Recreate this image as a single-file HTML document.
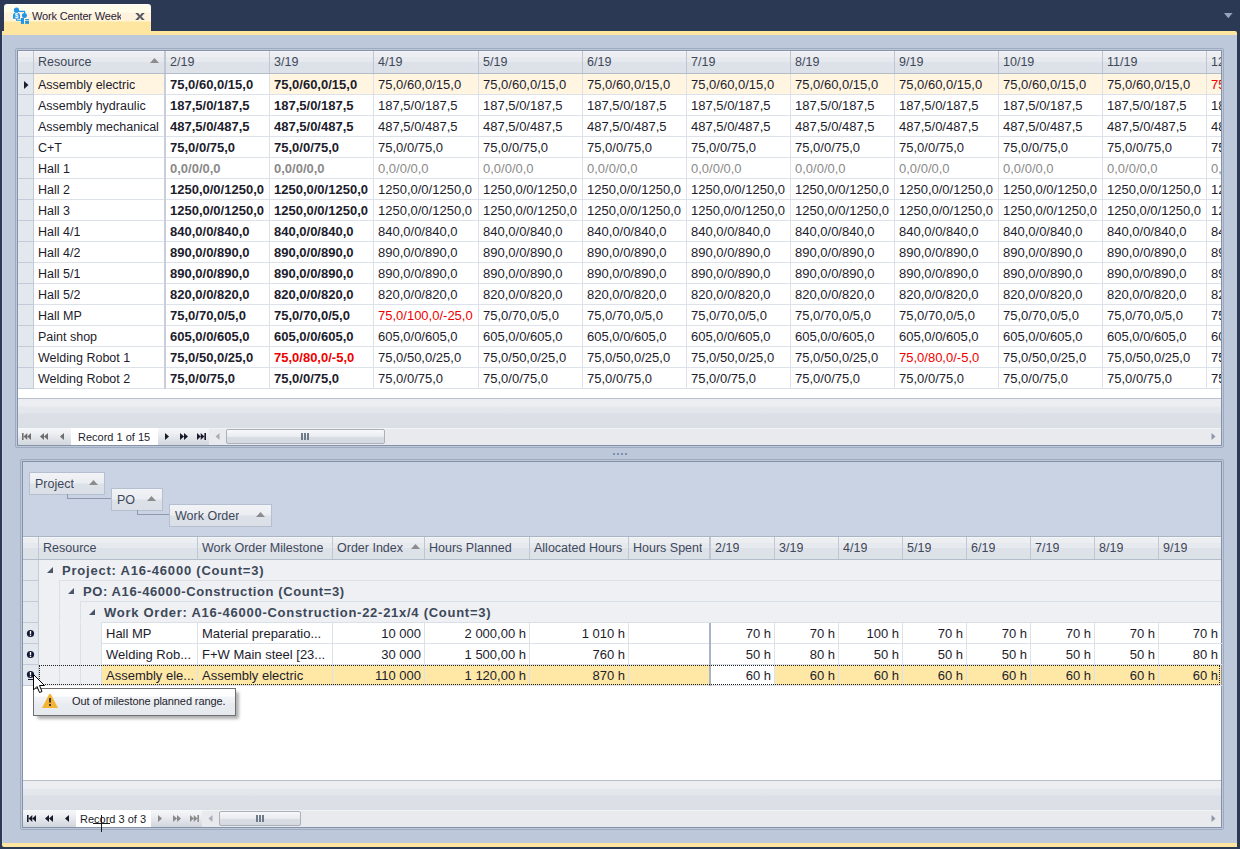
<!DOCTYPE html>
<html><head><meta charset="utf-8"><style>
html,body{margin:0;padding:0;}
body{width:1240px;height:849px;background:#2b3954;position:relative;overflow:hidden;font-family:'Liberation Sans', sans-serif;}
div{position:absolute;}
.t{white-space:nowrap;line-height:20px;overflow:hidden;}
</style></head><body>
<div style="left:2px;top:35px;width:1235px;height:808px;background:#bdc9da;"></div>
<div style="left:2px;top:35px;width:1px;height:808px;background:#c9d2df;"></div>
<div style="left:2px;top:31px;width:1235px;height:4px;background:#ffe6a0;border-top-right-radius:2px;"></div>
<div style="left:2px;top:843px;width:1235px;height:4px;background:#ffe6a0;border-bottom-left-radius:2px;"></div>
<div style="left:4px;top:4px;width:147px;height:27px;background:linear-gradient(#ffffff 0px,#ffffff 1px,#fffbec 1px,#fffce8 8px,#fff3de 9px,#fff2dc 16px,#fff7d2 17px,#ffe6a0 18px,#ffe6a0 27px);border-radius:3px 3px 0 0;"></div>
<svg style="position:absolute;left:10px;top:5px" width="22" height="22" viewBox="0 0 22 22">
<g fill="#1f95e6">
<circle cx="6.5" cy="5.2" r="2.6"/>
<path d="M3 13.8 V10.3 Q3 7.8 5.2 7.8 H7.8 Q10 7.8 10 10.3 V13.8 Z"/>
<circle cx="14.4" cy="10.4" r="2.5"/>
<rect x="10.9" y="13" width="3.1" height="5.9"/>
<rect x="15.2" y="14.1" width="3.8" height="1.2"/>
<rect x="15.2" y="15.9" width="3.8" height="3"/>
</g>
<path d="M8.5 6.3 H14.6 V8.3" stroke="#1f95e6" stroke-width="1.2" fill="none"/>
<path d="M6.5 13.5 V15.3 H11" stroke="#1f95e6" stroke-width="1.1" fill="none"/>
<text x="6.5" y="13" font-family="Liberation Sans" font-weight="bold" font-size="6.5" fill="#fff" text-anchor="middle">$</text>
</svg>
<div class="t" style="left:32px;top:6px;width:89px;overflow:hidden;font-size:11px;color:#24243a;letter-spacing:-0.15px;line-height:20px">Work Center Week</div>
<svg style="position:absolute;left:134.7px;top:13px" width="10" height="7" viewBox="0 0 9.6 7"><path d="M0 0 H3 L4.8 2.2 L6.6 0 H9.6 L6.3 3.5 L9.6 7 H6.6 L4.8 4.8 L3 7 H0 L3.3 3.5 Z" fill="#565b64"/></svg>
<svg style="position:absolute;left:1224.3px;top:12.7px" width="9" height="6" viewBox="0 0 9 6"><path d="M0 0 H8.6 L4.3 5.2 Z" fill="#95a3bd"/></svg>
<div style="left:15px;top:48px;width:1209px;height:400px;box-sizing:border-box;border:1px solid #9eaabd;border-radius:2px;"></div>
<div style="left:17px;top:50px;width:1205px;height:396px;box-sizing:border-box;border:1px solid #8591a6;"></div>
<div style="left:18px;top:51px;width:1203px;height:22px;background:linear-gradient(#f5f6f8 0px,#f5f6f8 1px,#eceef2 1px,#eceef2 6px,#e6e9ee 6px,#e6e9ee 11px,#dde1e8 11px,#dde1e8 22px);"></div>
<div style="left:18px;top:73px;width:1203px;height:1px;background:#b3bccb;"></div>
<div style="left:33px;top:51px;width:1px;height:22px;background:#bfc7d4;"></div>
<div style="left:164px;top:51px;width:2px;height:22px;background:#bfc7d4;"></div>
<div style="left:269px;top:51px;width:1px;height:22px;background:#bfc7d4;"></div>
<div style="left:373px;top:51px;width:1px;height:22px;background:#bfc7d4;"></div>
<div style="left:478px;top:51px;width:1px;height:22px;background:#bfc7d4;"></div>
<div style="left:582px;top:51px;width:1px;height:22px;background:#bfc7d4;"></div>
<div style="left:686px;top:51px;width:1px;height:22px;background:#bfc7d4;"></div>
<div style="left:790px;top:51px;width:1px;height:22px;background:#bfc7d4;"></div>
<div style="left:894px;top:51px;width:1px;height:22px;background:#bfc7d4;"></div>
<div style="left:998px;top:51px;width:1px;height:22px;background:#bfc7d4;"></div>
<div style="left:1102px;top:51px;width:1px;height:22px;background:#bfc7d4;"></div>
<div style="left:1206px;top:51px;width:1px;height:22px;background:#bfc7d4;"></div>
<div class="t" style="left:38px;top:52px;text-align:left;color:#3e485a;font-size:12.5px;">Resource</div>
<svg style="position:absolute;left:150px;top:58px" width="9" height="5" viewBox="0 0 9 5"><path d="M0 5 L4.5 0 L9 5 Z" fill="#8c8c8c"/></svg>
<div class="t" style="left:170px;top:52px;width:99px;text-align:left;color:#3e485a;font-size:12.5px;">2/19</div>
<div class="t" style="left:274px;top:52px;width:99px;text-align:left;color:#3e485a;font-size:12.5px;">3/19</div>
<div class="t" style="left:378px;top:52px;width:100px;text-align:left;color:#3e485a;font-size:12.5px;">4/19</div>
<div class="t" style="left:483px;top:52px;width:99px;text-align:left;color:#3e485a;font-size:12.5px;">5/19</div>
<div class="t" style="left:587px;top:52px;width:99px;text-align:left;color:#3e485a;font-size:12.5px;">6/19</div>
<div class="t" style="left:691px;top:52px;width:99px;text-align:left;color:#3e485a;font-size:12.5px;">7/19</div>
<div class="t" style="left:795px;top:52px;width:99px;text-align:left;color:#3e485a;font-size:12.5px;">8/19</div>
<div class="t" style="left:899px;top:52px;width:99px;text-align:left;color:#3e485a;font-size:12.5px;">9/19</div>
<div class="t" style="left:1003px;top:52px;width:99px;text-align:left;color:#3e485a;font-size:12.5px;">10/19</div>
<div class="t" style="left:1107px;top:52px;width:99px;text-align:left;color:#3e485a;font-size:12.5px;">11/19</div>
<div class="t" style="left:1211px;top:52px;width:10px;text-align:left;color:#3e485a;font-size:12.5px;">12/19</div>
<div style="left:18px;top:74px;width:1203px;height:370px;background:#fff;"></div>
<div style="left:18px;top:74px;width:15px;height:20px;background:#e3e7ee;"></div>
<div style="left:18px;top:94px;width:15px;height:1px;background:#c3cbd8;"></div>
<div style="left:33px;top:74px;width:1px;height:21px;background:#c3cbd8;"></div>
<div style="left:34px;top:74px;width:130px;height:20px;background:#fff5e1;"></div>
<div style="left:34px;top:94px;width:130px;height:1px;background:#dde2ea;"></div>
<div style="left:164px;top:74px;width:2px;height:21px;background:#c8cfdb;"></div>
<div class="t" style="left:38px;top:75px;text-align:left;color:#1c1c2c;font-size:12.5px;">Assembly electric</div>
<div style="left:166px;top:74px;width:103px;height:20px;background:#ffffff;"></div>
<div style="left:166px;top:94px;width:104px;height:1px;background:#dde2ea;"></div>
<div style="left:269px;top:74px;width:1px;height:20px;background:#dde2ea;"></div>
<div class="t" style="left:170px;top:75px;width:99px;text-align:left;color:#1c1c2c;font-size:13px;font-weight:bold;">75,0/60,0/15,0</div>
<div style="left:270px;top:74px;width:103px;height:20px;background:#fff5e1;"></div>
<div style="left:270px;top:94px;width:104px;height:1px;background:#dde2ea;"></div>
<div style="left:373px;top:74px;width:1px;height:20px;background:#dde2ea;"></div>
<div class="t" style="left:274px;top:75px;width:99px;text-align:left;color:#1c1c2c;font-size:13px;font-weight:bold;">75,0/60,0/15,0</div>
<div style="left:374px;top:74px;width:104px;height:20px;background:#fff5e1;"></div>
<div style="left:374px;top:94px;width:105px;height:1px;background:#dde2ea;"></div>
<div style="left:478px;top:74px;width:1px;height:20px;background:#dde2ea;"></div>
<div class="t" style="left:378px;top:75px;width:100px;text-align:left;color:#1c1c2c;font-size:13px;">75,0/60,0/15,0</div>
<div style="left:479px;top:74px;width:103px;height:20px;background:#fff5e1;"></div>
<div style="left:479px;top:94px;width:104px;height:1px;background:#dde2ea;"></div>
<div style="left:582px;top:74px;width:1px;height:20px;background:#dde2ea;"></div>
<div class="t" style="left:483px;top:75px;width:99px;text-align:left;color:#1c1c2c;font-size:13px;">75,0/60,0/15,0</div>
<div style="left:583px;top:74px;width:103px;height:20px;background:#fff5e1;"></div>
<div style="left:583px;top:94px;width:104px;height:1px;background:#dde2ea;"></div>
<div style="left:686px;top:74px;width:1px;height:20px;background:#dde2ea;"></div>
<div class="t" style="left:587px;top:75px;width:99px;text-align:left;color:#1c1c2c;font-size:13px;">75,0/60,0/15,0</div>
<div style="left:687px;top:74px;width:103px;height:20px;background:#fff5e1;"></div>
<div style="left:687px;top:94px;width:104px;height:1px;background:#dde2ea;"></div>
<div style="left:790px;top:74px;width:1px;height:20px;background:#dde2ea;"></div>
<div class="t" style="left:691px;top:75px;width:99px;text-align:left;color:#1c1c2c;font-size:13px;">75,0/60,0/15,0</div>
<div style="left:791px;top:74px;width:103px;height:20px;background:#fff5e1;"></div>
<div style="left:791px;top:94px;width:104px;height:1px;background:#dde2ea;"></div>
<div style="left:894px;top:74px;width:1px;height:20px;background:#dde2ea;"></div>
<div class="t" style="left:795px;top:75px;width:99px;text-align:left;color:#1c1c2c;font-size:13px;">75,0/60,0/15,0</div>
<div style="left:895px;top:74px;width:103px;height:20px;background:#fff5e1;"></div>
<div style="left:895px;top:94px;width:104px;height:1px;background:#dde2ea;"></div>
<div style="left:998px;top:74px;width:1px;height:20px;background:#dde2ea;"></div>
<div class="t" style="left:899px;top:75px;width:99px;text-align:left;color:#1c1c2c;font-size:13px;">75,0/60,0/15,0</div>
<div style="left:999px;top:74px;width:103px;height:20px;background:#fff5e1;"></div>
<div style="left:999px;top:94px;width:104px;height:1px;background:#dde2ea;"></div>
<div style="left:1102px;top:74px;width:1px;height:20px;background:#dde2ea;"></div>
<div class="t" style="left:1003px;top:75px;width:99px;text-align:left;color:#1c1c2c;font-size:13px;">75,0/60,0/15,0</div>
<div style="left:1103px;top:74px;width:103px;height:20px;background:#fff5e1;"></div>
<div style="left:1103px;top:94px;width:104px;height:1px;background:#dde2ea;"></div>
<div style="left:1206px;top:74px;width:1px;height:20px;background:#dde2ea;"></div>
<div class="t" style="left:1107px;top:75px;width:99px;text-align:left;color:#1c1c2c;font-size:13px;">75,0/60,0/15,0</div>
<div style="left:1207px;top:74px;width:14px;height:20px;background:#fff5e1;"></div>
<div style="left:1207px;top:94px;width:14px;height:1px;background:#dde2ea;"></div>
<div class="t" style="left:1211px;top:75px;width:10px;text-align:left;color:#ee0000;font-size:13px;">75,0/60,0/15,0</div>
<div style="left:18px;top:95px;width:15px;height:20px;background:#e3e7ee;"></div>
<div style="left:18px;top:115px;width:15px;height:1px;background:#c3cbd8;"></div>
<div style="left:33px;top:95px;width:1px;height:21px;background:#c3cbd8;"></div>
<div style="left:34px;top:95px;width:130px;height:20px;background:#ffffff;"></div>
<div style="left:34px;top:115px;width:130px;height:1px;background:#dde2ea;"></div>
<div style="left:164px;top:95px;width:2px;height:21px;background:#c8cfdb;"></div>
<div class="t" style="left:38px;top:96px;text-align:left;color:#1c1c2c;font-size:12.5px;">Assembly hydraulic</div>
<div style="left:166px;top:95px;width:103px;height:20px;background:#ffffff;"></div>
<div style="left:166px;top:115px;width:104px;height:1px;background:#dde2ea;"></div>
<div style="left:269px;top:95px;width:1px;height:20px;background:#dde2ea;"></div>
<div class="t" style="left:170px;top:96px;width:99px;text-align:left;color:#1c1c2c;font-size:13px;font-weight:bold;">187,5/0/187,5</div>
<div style="left:270px;top:95px;width:103px;height:20px;background:#ffffff;"></div>
<div style="left:270px;top:115px;width:104px;height:1px;background:#dde2ea;"></div>
<div style="left:373px;top:95px;width:1px;height:20px;background:#dde2ea;"></div>
<div class="t" style="left:274px;top:96px;width:99px;text-align:left;color:#1c1c2c;font-size:13px;font-weight:bold;">187,5/0/187,5</div>
<div style="left:374px;top:95px;width:104px;height:20px;background:#ffffff;"></div>
<div style="left:374px;top:115px;width:105px;height:1px;background:#dde2ea;"></div>
<div style="left:478px;top:95px;width:1px;height:20px;background:#dde2ea;"></div>
<div class="t" style="left:378px;top:96px;width:100px;text-align:left;color:#1c1c2c;font-size:13px;">187,5/0/187,5</div>
<div style="left:479px;top:95px;width:103px;height:20px;background:#ffffff;"></div>
<div style="left:479px;top:115px;width:104px;height:1px;background:#dde2ea;"></div>
<div style="left:582px;top:95px;width:1px;height:20px;background:#dde2ea;"></div>
<div class="t" style="left:483px;top:96px;width:99px;text-align:left;color:#1c1c2c;font-size:13px;">187,5/0/187,5</div>
<div style="left:583px;top:95px;width:103px;height:20px;background:#ffffff;"></div>
<div style="left:583px;top:115px;width:104px;height:1px;background:#dde2ea;"></div>
<div style="left:686px;top:95px;width:1px;height:20px;background:#dde2ea;"></div>
<div class="t" style="left:587px;top:96px;width:99px;text-align:left;color:#1c1c2c;font-size:13px;">187,5/0/187,5</div>
<div style="left:687px;top:95px;width:103px;height:20px;background:#ffffff;"></div>
<div style="left:687px;top:115px;width:104px;height:1px;background:#dde2ea;"></div>
<div style="left:790px;top:95px;width:1px;height:20px;background:#dde2ea;"></div>
<div class="t" style="left:691px;top:96px;width:99px;text-align:left;color:#1c1c2c;font-size:13px;">187,5/0/187,5</div>
<div style="left:791px;top:95px;width:103px;height:20px;background:#ffffff;"></div>
<div style="left:791px;top:115px;width:104px;height:1px;background:#dde2ea;"></div>
<div style="left:894px;top:95px;width:1px;height:20px;background:#dde2ea;"></div>
<div class="t" style="left:795px;top:96px;width:99px;text-align:left;color:#1c1c2c;font-size:13px;">187,5/0/187,5</div>
<div style="left:895px;top:95px;width:103px;height:20px;background:#ffffff;"></div>
<div style="left:895px;top:115px;width:104px;height:1px;background:#dde2ea;"></div>
<div style="left:998px;top:95px;width:1px;height:20px;background:#dde2ea;"></div>
<div class="t" style="left:899px;top:96px;width:99px;text-align:left;color:#1c1c2c;font-size:13px;">187,5/0/187,5</div>
<div style="left:999px;top:95px;width:103px;height:20px;background:#ffffff;"></div>
<div style="left:999px;top:115px;width:104px;height:1px;background:#dde2ea;"></div>
<div style="left:1102px;top:95px;width:1px;height:20px;background:#dde2ea;"></div>
<div class="t" style="left:1003px;top:96px;width:99px;text-align:left;color:#1c1c2c;font-size:13px;">187,5/0/187,5</div>
<div style="left:1103px;top:95px;width:103px;height:20px;background:#ffffff;"></div>
<div style="left:1103px;top:115px;width:104px;height:1px;background:#dde2ea;"></div>
<div style="left:1206px;top:95px;width:1px;height:20px;background:#dde2ea;"></div>
<div class="t" style="left:1107px;top:96px;width:99px;text-align:left;color:#1c1c2c;font-size:13px;">187,5/0/187,5</div>
<div style="left:1207px;top:95px;width:14px;height:20px;background:#ffffff;"></div>
<div style="left:1207px;top:115px;width:14px;height:1px;background:#dde2ea;"></div>
<div class="t" style="left:1211px;top:96px;width:10px;text-align:left;color:#1c1c2c;font-size:13px;">187,5/0/187,5</div>
<div style="left:18px;top:116px;width:15px;height:20px;background:#e3e7ee;"></div>
<div style="left:18px;top:136px;width:15px;height:1px;background:#c3cbd8;"></div>
<div style="left:33px;top:116px;width:1px;height:21px;background:#c3cbd8;"></div>
<div style="left:34px;top:116px;width:130px;height:20px;background:#ffffff;"></div>
<div style="left:34px;top:136px;width:130px;height:1px;background:#dde2ea;"></div>
<div style="left:164px;top:116px;width:2px;height:21px;background:#c8cfdb;"></div>
<div class="t" style="left:38px;top:117px;text-align:left;color:#1c1c2c;font-size:12.5px;">Assembly mechanical</div>
<div style="left:166px;top:116px;width:103px;height:20px;background:#ffffff;"></div>
<div style="left:166px;top:136px;width:104px;height:1px;background:#dde2ea;"></div>
<div style="left:269px;top:116px;width:1px;height:20px;background:#dde2ea;"></div>
<div class="t" style="left:170px;top:117px;width:99px;text-align:left;color:#1c1c2c;font-size:13px;font-weight:bold;">487,5/0/487,5</div>
<div style="left:270px;top:116px;width:103px;height:20px;background:#ffffff;"></div>
<div style="left:270px;top:136px;width:104px;height:1px;background:#dde2ea;"></div>
<div style="left:373px;top:116px;width:1px;height:20px;background:#dde2ea;"></div>
<div class="t" style="left:274px;top:117px;width:99px;text-align:left;color:#1c1c2c;font-size:13px;font-weight:bold;">487,5/0/487,5</div>
<div style="left:374px;top:116px;width:104px;height:20px;background:#ffffff;"></div>
<div style="left:374px;top:136px;width:105px;height:1px;background:#dde2ea;"></div>
<div style="left:478px;top:116px;width:1px;height:20px;background:#dde2ea;"></div>
<div class="t" style="left:378px;top:117px;width:100px;text-align:left;color:#1c1c2c;font-size:13px;">487,5/0/487,5</div>
<div style="left:479px;top:116px;width:103px;height:20px;background:#ffffff;"></div>
<div style="left:479px;top:136px;width:104px;height:1px;background:#dde2ea;"></div>
<div style="left:582px;top:116px;width:1px;height:20px;background:#dde2ea;"></div>
<div class="t" style="left:483px;top:117px;width:99px;text-align:left;color:#1c1c2c;font-size:13px;">487,5/0/487,5</div>
<div style="left:583px;top:116px;width:103px;height:20px;background:#ffffff;"></div>
<div style="left:583px;top:136px;width:104px;height:1px;background:#dde2ea;"></div>
<div style="left:686px;top:116px;width:1px;height:20px;background:#dde2ea;"></div>
<div class="t" style="left:587px;top:117px;width:99px;text-align:left;color:#1c1c2c;font-size:13px;">487,5/0/487,5</div>
<div style="left:687px;top:116px;width:103px;height:20px;background:#ffffff;"></div>
<div style="left:687px;top:136px;width:104px;height:1px;background:#dde2ea;"></div>
<div style="left:790px;top:116px;width:1px;height:20px;background:#dde2ea;"></div>
<div class="t" style="left:691px;top:117px;width:99px;text-align:left;color:#1c1c2c;font-size:13px;">487,5/0/487,5</div>
<div style="left:791px;top:116px;width:103px;height:20px;background:#ffffff;"></div>
<div style="left:791px;top:136px;width:104px;height:1px;background:#dde2ea;"></div>
<div style="left:894px;top:116px;width:1px;height:20px;background:#dde2ea;"></div>
<div class="t" style="left:795px;top:117px;width:99px;text-align:left;color:#1c1c2c;font-size:13px;">487,5/0/487,5</div>
<div style="left:895px;top:116px;width:103px;height:20px;background:#ffffff;"></div>
<div style="left:895px;top:136px;width:104px;height:1px;background:#dde2ea;"></div>
<div style="left:998px;top:116px;width:1px;height:20px;background:#dde2ea;"></div>
<div class="t" style="left:899px;top:117px;width:99px;text-align:left;color:#1c1c2c;font-size:13px;">487,5/0/487,5</div>
<div style="left:999px;top:116px;width:103px;height:20px;background:#ffffff;"></div>
<div style="left:999px;top:136px;width:104px;height:1px;background:#dde2ea;"></div>
<div style="left:1102px;top:116px;width:1px;height:20px;background:#dde2ea;"></div>
<div class="t" style="left:1003px;top:117px;width:99px;text-align:left;color:#1c1c2c;font-size:13px;">487,5/0/487,5</div>
<div style="left:1103px;top:116px;width:103px;height:20px;background:#ffffff;"></div>
<div style="left:1103px;top:136px;width:104px;height:1px;background:#dde2ea;"></div>
<div style="left:1206px;top:116px;width:1px;height:20px;background:#dde2ea;"></div>
<div class="t" style="left:1107px;top:117px;width:99px;text-align:left;color:#1c1c2c;font-size:13px;">487,5/0/487,5</div>
<div style="left:1207px;top:116px;width:14px;height:20px;background:#ffffff;"></div>
<div style="left:1207px;top:136px;width:14px;height:1px;background:#dde2ea;"></div>
<div class="t" style="left:1211px;top:117px;width:10px;text-align:left;color:#1c1c2c;font-size:13px;">487,5/0/487,5</div>
<div style="left:18px;top:137px;width:15px;height:20px;background:#e3e7ee;"></div>
<div style="left:18px;top:157px;width:15px;height:1px;background:#c3cbd8;"></div>
<div style="left:33px;top:137px;width:1px;height:21px;background:#c3cbd8;"></div>
<div style="left:34px;top:137px;width:130px;height:20px;background:#ffffff;"></div>
<div style="left:34px;top:157px;width:130px;height:1px;background:#dde2ea;"></div>
<div style="left:164px;top:137px;width:2px;height:21px;background:#c8cfdb;"></div>
<div class="t" style="left:38px;top:138px;text-align:left;color:#1c1c2c;font-size:12.5px;">C+T</div>
<div style="left:166px;top:137px;width:103px;height:20px;background:#ffffff;"></div>
<div style="left:166px;top:157px;width:104px;height:1px;background:#dde2ea;"></div>
<div style="left:269px;top:137px;width:1px;height:20px;background:#dde2ea;"></div>
<div class="t" style="left:170px;top:138px;width:99px;text-align:left;color:#1c1c2c;font-size:13px;font-weight:bold;">75,0/0/75,0</div>
<div style="left:270px;top:137px;width:103px;height:20px;background:#ffffff;"></div>
<div style="left:270px;top:157px;width:104px;height:1px;background:#dde2ea;"></div>
<div style="left:373px;top:137px;width:1px;height:20px;background:#dde2ea;"></div>
<div class="t" style="left:274px;top:138px;width:99px;text-align:left;color:#1c1c2c;font-size:13px;font-weight:bold;">75,0/0/75,0</div>
<div style="left:374px;top:137px;width:104px;height:20px;background:#ffffff;"></div>
<div style="left:374px;top:157px;width:105px;height:1px;background:#dde2ea;"></div>
<div style="left:478px;top:137px;width:1px;height:20px;background:#dde2ea;"></div>
<div class="t" style="left:378px;top:138px;width:100px;text-align:left;color:#1c1c2c;font-size:13px;">75,0/0/75,0</div>
<div style="left:479px;top:137px;width:103px;height:20px;background:#ffffff;"></div>
<div style="left:479px;top:157px;width:104px;height:1px;background:#dde2ea;"></div>
<div style="left:582px;top:137px;width:1px;height:20px;background:#dde2ea;"></div>
<div class="t" style="left:483px;top:138px;width:99px;text-align:left;color:#1c1c2c;font-size:13px;">75,0/0/75,0</div>
<div style="left:583px;top:137px;width:103px;height:20px;background:#ffffff;"></div>
<div style="left:583px;top:157px;width:104px;height:1px;background:#dde2ea;"></div>
<div style="left:686px;top:137px;width:1px;height:20px;background:#dde2ea;"></div>
<div class="t" style="left:587px;top:138px;width:99px;text-align:left;color:#1c1c2c;font-size:13px;">75,0/0/75,0</div>
<div style="left:687px;top:137px;width:103px;height:20px;background:#ffffff;"></div>
<div style="left:687px;top:157px;width:104px;height:1px;background:#dde2ea;"></div>
<div style="left:790px;top:137px;width:1px;height:20px;background:#dde2ea;"></div>
<div class="t" style="left:691px;top:138px;width:99px;text-align:left;color:#1c1c2c;font-size:13px;">75,0/0/75,0</div>
<div style="left:791px;top:137px;width:103px;height:20px;background:#ffffff;"></div>
<div style="left:791px;top:157px;width:104px;height:1px;background:#dde2ea;"></div>
<div style="left:894px;top:137px;width:1px;height:20px;background:#dde2ea;"></div>
<div class="t" style="left:795px;top:138px;width:99px;text-align:left;color:#1c1c2c;font-size:13px;">75,0/0/75,0</div>
<div style="left:895px;top:137px;width:103px;height:20px;background:#ffffff;"></div>
<div style="left:895px;top:157px;width:104px;height:1px;background:#dde2ea;"></div>
<div style="left:998px;top:137px;width:1px;height:20px;background:#dde2ea;"></div>
<div class="t" style="left:899px;top:138px;width:99px;text-align:left;color:#1c1c2c;font-size:13px;">75,0/0/75,0</div>
<div style="left:999px;top:137px;width:103px;height:20px;background:#ffffff;"></div>
<div style="left:999px;top:157px;width:104px;height:1px;background:#dde2ea;"></div>
<div style="left:1102px;top:137px;width:1px;height:20px;background:#dde2ea;"></div>
<div class="t" style="left:1003px;top:138px;width:99px;text-align:left;color:#1c1c2c;font-size:13px;">75,0/0/75,0</div>
<div style="left:1103px;top:137px;width:103px;height:20px;background:#ffffff;"></div>
<div style="left:1103px;top:157px;width:104px;height:1px;background:#dde2ea;"></div>
<div style="left:1206px;top:137px;width:1px;height:20px;background:#dde2ea;"></div>
<div class="t" style="left:1107px;top:138px;width:99px;text-align:left;color:#1c1c2c;font-size:13px;">75,0/0/75,0</div>
<div style="left:1207px;top:137px;width:14px;height:20px;background:#ffffff;"></div>
<div style="left:1207px;top:157px;width:14px;height:1px;background:#dde2ea;"></div>
<div class="t" style="left:1211px;top:138px;width:10px;text-align:left;color:#1c1c2c;font-size:13px;">75,0/0/75,0</div>
<div style="left:18px;top:158px;width:15px;height:20px;background:#e3e7ee;"></div>
<div style="left:18px;top:178px;width:15px;height:1px;background:#c3cbd8;"></div>
<div style="left:33px;top:158px;width:1px;height:21px;background:#c3cbd8;"></div>
<div style="left:34px;top:158px;width:130px;height:20px;background:#ffffff;"></div>
<div style="left:34px;top:178px;width:130px;height:1px;background:#dde2ea;"></div>
<div style="left:164px;top:158px;width:2px;height:21px;background:#c8cfdb;"></div>
<div class="t" style="left:38px;top:159px;text-align:left;color:#1c1c2c;font-size:12.5px;">Hall 1</div>
<div style="left:166px;top:158px;width:103px;height:20px;background:#ffffff;"></div>
<div style="left:166px;top:178px;width:104px;height:1px;background:#dde2ea;"></div>
<div style="left:269px;top:158px;width:1px;height:20px;background:#dde2ea;"></div>
<div class="t" style="left:170px;top:159px;width:99px;text-align:left;color:#8a8a8a;font-size:13px;font-weight:bold;">0,0/0/0,0</div>
<div style="left:270px;top:158px;width:103px;height:20px;background:#ffffff;"></div>
<div style="left:270px;top:178px;width:104px;height:1px;background:#dde2ea;"></div>
<div style="left:373px;top:158px;width:1px;height:20px;background:#dde2ea;"></div>
<div class="t" style="left:274px;top:159px;width:99px;text-align:left;color:#8a8a8a;font-size:13px;font-weight:bold;">0,0/0/0,0</div>
<div style="left:374px;top:158px;width:104px;height:20px;background:#ffffff;"></div>
<div style="left:374px;top:178px;width:105px;height:1px;background:#dde2ea;"></div>
<div style="left:478px;top:158px;width:1px;height:20px;background:#dde2ea;"></div>
<div class="t" style="left:378px;top:159px;width:100px;text-align:left;color:#8a8a8a;font-size:13px;">0,0/0/0,0</div>
<div style="left:479px;top:158px;width:103px;height:20px;background:#ffffff;"></div>
<div style="left:479px;top:178px;width:104px;height:1px;background:#dde2ea;"></div>
<div style="left:582px;top:158px;width:1px;height:20px;background:#dde2ea;"></div>
<div class="t" style="left:483px;top:159px;width:99px;text-align:left;color:#8a8a8a;font-size:13px;">0,0/0/0,0</div>
<div style="left:583px;top:158px;width:103px;height:20px;background:#ffffff;"></div>
<div style="left:583px;top:178px;width:104px;height:1px;background:#dde2ea;"></div>
<div style="left:686px;top:158px;width:1px;height:20px;background:#dde2ea;"></div>
<div class="t" style="left:587px;top:159px;width:99px;text-align:left;color:#8a8a8a;font-size:13px;">0,0/0/0,0</div>
<div style="left:687px;top:158px;width:103px;height:20px;background:#ffffff;"></div>
<div style="left:687px;top:178px;width:104px;height:1px;background:#dde2ea;"></div>
<div style="left:790px;top:158px;width:1px;height:20px;background:#dde2ea;"></div>
<div class="t" style="left:691px;top:159px;width:99px;text-align:left;color:#8a8a8a;font-size:13px;">0,0/0/0,0</div>
<div style="left:791px;top:158px;width:103px;height:20px;background:#ffffff;"></div>
<div style="left:791px;top:178px;width:104px;height:1px;background:#dde2ea;"></div>
<div style="left:894px;top:158px;width:1px;height:20px;background:#dde2ea;"></div>
<div class="t" style="left:795px;top:159px;width:99px;text-align:left;color:#8a8a8a;font-size:13px;">0,0/0/0,0</div>
<div style="left:895px;top:158px;width:103px;height:20px;background:#ffffff;"></div>
<div style="left:895px;top:178px;width:104px;height:1px;background:#dde2ea;"></div>
<div style="left:998px;top:158px;width:1px;height:20px;background:#dde2ea;"></div>
<div class="t" style="left:899px;top:159px;width:99px;text-align:left;color:#8a8a8a;font-size:13px;">0,0/0/0,0</div>
<div style="left:999px;top:158px;width:103px;height:20px;background:#ffffff;"></div>
<div style="left:999px;top:178px;width:104px;height:1px;background:#dde2ea;"></div>
<div style="left:1102px;top:158px;width:1px;height:20px;background:#dde2ea;"></div>
<div class="t" style="left:1003px;top:159px;width:99px;text-align:left;color:#8a8a8a;font-size:13px;">0,0/0/0,0</div>
<div style="left:1103px;top:158px;width:103px;height:20px;background:#ffffff;"></div>
<div style="left:1103px;top:178px;width:104px;height:1px;background:#dde2ea;"></div>
<div style="left:1206px;top:158px;width:1px;height:20px;background:#dde2ea;"></div>
<div class="t" style="left:1107px;top:159px;width:99px;text-align:left;color:#8a8a8a;font-size:13px;">0,0/0/0,0</div>
<div style="left:1207px;top:158px;width:14px;height:20px;background:#ffffff;"></div>
<div style="left:1207px;top:178px;width:14px;height:1px;background:#dde2ea;"></div>
<div class="t" style="left:1211px;top:159px;width:10px;text-align:left;color:#8a8a8a;font-size:13px;">0,0/0/0,0</div>
<div style="left:18px;top:179px;width:15px;height:20px;background:#e3e7ee;"></div>
<div style="left:18px;top:199px;width:15px;height:1px;background:#c3cbd8;"></div>
<div style="left:33px;top:179px;width:1px;height:21px;background:#c3cbd8;"></div>
<div style="left:34px;top:179px;width:130px;height:20px;background:#ffffff;"></div>
<div style="left:34px;top:199px;width:130px;height:1px;background:#dde2ea;"></div>
<div style="left:164px;top:179px;width:2px;height:21px;background:#c8cfdb;"></div>
<div class="t" style="left:38px;top:180px;text-align:left;color:#1c1c2c;font-size:12.5px;">Hall 2</div>
<div style="left:166px;top:179px;width:103px;height:20px;background:#ffffff;"></div>
<div style="left:166px;top:199px;width:104px;height:1px;background:#dde2ea;"></div>
<div style="left:269px;top:179px;width:1px;height:20px;background:#dde2ea;"></div>
<div class="t" style="left:170px;top:180px;width:99px;text-align:left;color:#1c1c2c;font-size:13px;font-weight:bold;">1250,0/0/1250,0</div>
<div style="left:270px;top:179px;width:103px;height:20px;background:#ffffff;"></div>
<div style="left:270px;top:199px;width:104px;height:1px;background:#dde2ea;"></div>
<div style="left:373px;top:179px;width:1px;height:20px;background:#dde2ea;"></div>
<div class="t" style="left:274px;top:180px;width:99px;text-align:left;color:#1c1c2c;font-size:13px;font-weight:bold;">1250,0/0/1250,0</div>
<div style="left:374px;top:179px;width:104px;height:20px;background:#ffffff;"></div>
<div style="left:374px;top:199px;width:105px;height:1px;background:#dde2ea;"></div>
<div style="left:478px;top:179px;width:1px;height:20px;background:#dde2ea;"></div>
<div class="t" style="left:378px;top:180px;width:100px;text-align:left;color:#1c1c2c;font-size:13px;">1250,0/0/1250,0</div>
<div style="left:479px;top:179px;width:103px;height:20px;background:#ffffff;"></div>
<div style="left:479px;top:199px;width:104px;height:1px;background:#dde2ea;"></div>
<div style="left:582px;top:179px;width:1px;height:20px;background:#dde2ea;"></div>
<div class="t" style="left:483px;top:180px;width:99px;text-align:left;color:#1c1c2c;font-size:13px;">1250,0/0/1250,0</div>
<div style="left:583px;top:179px;width:103px;height:20px;background:#ffffff;"></div>
<div style="left:583px;top:199px;width:104px;height:1px;background:#dde2ea;"></div>
<div style="left:686px;top:179px;width:1px;height:20px;background:#dde2ea;"></div>
<div class="t" style="left:587px;top:180px;width:99px;text-align:left;color:#1c1c2c;font-size:13px;">1250,0/0/1250,0</div>
<div style="left:687px;top:179px;width:103px;height:20px;background:#ffffff;"></div>
<div style="left:687px;top:199px;width:104px;height:1px;background:#dde2ea;"></div>
<div style="left:790px;top:179px;width:1px;height:20px;background:#dde2ea;"></div>
<div class="t" style="left:691px;top:180px;width:99px;text-align:left;color:#1c1c2c;font-size:13px;">1250,0/0/1250,0</div>
<div style="left:791px;top:179px;width:103px;height:20px;background:#ffffff;"></div>
<div style="left:791px;top:199px;width:104px;height:1px;background:#dde2ea;"></div>
<div style="left:894px;top:179px;width:1px;height:20px;background:#dde2ea;"></div>
<div class="t" style="left:795px;top:180px;width:99px;text-align:left;color:#1c1c2c;font-size:13px;">1250,0/0/1250,0</div>
<div style="left:895px;top:179px;width:103px;height:20px;background:#ffffff;"></div>
<div style="left:895px;top:199px;width:104px;height:1px;background:#dde2ea;"></div>
<div style="left:998px;top:179px;width:1px;height:20px;background:#dde2ea;"></div>
<div class="t" style="left:899px;top:180px;width:99px;text-align:left;color:#1c1c2c;font-size:13px;">1250,0/0/1250,0</div>
<div style="left:999px;top:179px;width:103px;height:20px;background:#ffffff;"></div>
<div style="left:999px;top:199px;width:104px;height:1px;background:#dde2ea;"></div>
<div style="left:1102px;top:179px;width:1px;height:20px;background:#dde2ea;"></div>
<div class="t" style="left:1003px;top:180px;width:99px;text-align:left;color:#1c1c2c;font-size:13px;">1250,0/0/1250,0</div>
<div style="left:1103px;top:179px;width:103px;height:20px;background:#ffffff;"></div>
<div style="left:1103px;top:199px;width:104px;height:1px;background:#dde2ea;"></div>
<div style="left:1206px;top:179px;width:1px;height:20px;background:#dde2ea;"></div>
<div class="t" style="left:1107px;top:180px;width:99px;text-align:left;color:#1c1c2c;font-size:13px;">1250,0/0/1250,0</div>
<div style="left:1207px;top:179px;width:14px;height:20px;background:#ffffff;"></div>
<div style="left:1207px;top:199px;width:14px;height:1px;background:#dde2ea;"></div>
<div class="t" style="left:1211px;top:180px;width:10px;text-align:left;color:#1c1c2c;font-size:13px;">1250,0/0/1250,0</div>
<div style="left:18px;top:200px;width:15px;height:20px;background:#e3e7ee;"></div>
<div style="left:18px;top:220px;width:15px;height:1px;background:#c3cbd8;"></div>
<div style="left:33px;top:200px;width:1px;height:21px;background:#c3cbd8;"></div>
<div style="left:34px;top:200px;width:130px;height:20px;background:#ffffff;"></div>
<div style="left:34px;top:220px;width:130px;height:1px;background:#dde2ea;"></div>
<div style="left:164px;top:200px;width:2px;height:21px;background:#c8cfdb;"></div>
<div class="t" style="left:38px;top:201px;text-align:left;color:#1c1c2c;font-size:12.5px;">Hall 3</div>
<div style="left:166px;top:200px;width:103px;height:20px;background:#ffffff;"></div>
<div style="left:166px;top:220px;width:104px;height:1px;background:#dde2ea;"></div>
<div style="left:269px;top:200px;width:1px;height:20px;background:#dde2ea;"></div>
<div class="t" style="left:170px;top:201px;width:99px;text-align:left;color:#1c1c2c;font-size:13px;font-weight:bold;">1250,0/0/1250,0</div>
<div style="left:270px;top:200px;width:103px;height:20px;background:#ffffff;"></div>
<div style="left:270px;top:220px;width:104px;height:1px;background:#dde2ea;"></div>
<div style="left:373px;top:200px;width:1px;height:20px;background:#dde2ea;"></div>
<div class="t" style="left:274px;top:201px;width:99px;text-align:left;color:#1c1c2c;font-size:13px;font-weight:bold;">1250,0/0/1250,0</div>
<div style="left:374px;top:200px;width:104px;height:20px;background:#ffffff;"></div>
<div style="left:374px;top:220px;width:105px;height:1px;background:#dde2ea;"></div>
<div style="left:478px;top:200px;width:1px;height:20px;background:#dde2ea;"></div>
<div class="t" style="left:378px;top:201px;width:100px;text-align:left;color:#1c1c2c;font-size:13px;">1250,0/0/1250,0</div>
<div style="left:479px;top:200px;width:103px;height:20px;background:#ffffff;"></div>
<div style="left:479px;top:220px;width:104px;height:1px;background:#dde2ea;"></div>
<div style="left:582px;top:200px;width:1px;height:20px;background:#dde2ea;"></div>
<div class="t" style="left:483px;top:201px;width:99px;text-align:left;color:#1c1c2c;font-size:13px;">1250,0/0/1250,0</div>
<div style="left:583px;top:200px;width:103px;height:20px;background:#ffffff;"></div>
<div style="left:583px;top:220px;width:104px;height:1px;background:#dde2ea;"></div>
<div style="left:686px;top:200px;width:1px;height:20px;background:#dde2ea;"></div>
<div class="t" style="left:587px;top:201px;width:99px;text-align:left;color:#1c1c2c;font-size:13px;">1250,0/0/1250,0</div>
<div style="left:687px;top:200px;width:103px;height:20px;background:#ffffff;"></div>
<div style="left:687px;top:220px;width:104px;height:1px;background:#dde2ea;"></div>
<div style="left:790px;top:200px;width:1px;height:20px;background:#dde2ea;"></div>
<div class="t" style="left:691px;top:201px;width:99px;text-align:left;color:#1c1c2c;font-size:13px;">1250,0/0/1250,0</div>
<div style="left:791px;top:200px;width:103px;height:20px;background:#ffffff;"></div>
<div style="left:791px;top:220px;width:104px;height:1px;background:#dde2ea;"></div>
<div style="left:894px;top:200px;width:1px;height:20px;background:#dde2ea;"></div>
<div class="t" style="left:795px;top:201px;width:99px;text-align:left;color:#1c1c2c;font-size:13px;">1250,0/0/1250,0</div>
<div style="left:895px;top:200px;width:103px;height:20px;background:#ffffff;"></div>
<div style="left:895px;top:220px;width:104px;height:1px;background:#dde2ea;"></div>
<div style="left:998px;top:200px;width:1px;height:20px;background:#dde2ea;"></div>
<div class="t" style="left:899px;top:201px;width:99px;text-align:left;color:#1c1c2c;font-size:13px;">1250,0/0/1250,0</div>
<div style="left:999px;top:200px;width:103px;height:20px;background:#ffffff;"></div>
<div style="left:999px;top:220px;width:104px;height:1px;background:#dde2ea;"></div>
<div style="left:1102px;top:200px;width:1px;height:20px;background:#dde2ea;"></div>
<div class="t" style="left:1003px;top:201px;width:99px;text-align:left;color:#1c1c2c;font-size:13px;">1250,0/0/1250,0</div>
<div style="left:1103px;top:200px;width:103px;height:20px;background:#ffffff;"></div>
<div style="left:1103px;top:220px;width:104px;height:1px;background:#dde2ea;"></div>
<div style="left:1206px;top:200px;width:1px;height:20px;background:#dde2ea;"></div>
<div class="t" style="left:1107px;top:201px;width:99px;text-align:left;color:#1c1c2c;font-size:13px;">1250,0/0/1250,0</div>
<div style="left:1207px;top:200px;width:14px;height:20px;background:#ffffff;"></div>
<div style="left:1207px;top:220px;width:14px;height:1px;background:#dde2ea;"></div>
<div class="t" style="left:1211px;top:201px;width:10px;text-align:left;color:#1c1c2c;font-size:13px;">1250,0/0/1250,0</div>
<div style="left:18px;top:221px;width:15px;height:20px;background:#e3e7ee;"></div>
<div style="left:18px;top:241px;width:15px;height:1px;background:#c3cbd8;"></div>
<div style="left:33px;top:221px;width:1px;height:21px;background:#c3cbd8;"></div>
<div style="left:34px;top:221px;width:130px;height:20px;background:#ffffff;"></div>
<div style="left:34px;top:241px;width:130px;height:1px;background:#dde2ea;"></div>
<div style="left:164px;top:221px;width:2px;height:21px;background:#c8cfdb;"></div>
<div class="t" style="left:38px;top:222px;text-align:left;color:#1c1c2c;font-size:12.5px;">Hall 4/1</div>
<div style="left:166px;top:221px;width:103px;height:20px;background:#ffffff;"></div>
<div style="left:166px;top:241px;width:104px;height:1px;background:#dde2ea;"></div>
<div style="left:269px;top:221px;width:1px;height:20px;background:#dde2ea;"></div>
<div class="t" style="left:170px;top:222px;width:99px;text-align:left;color:#1c1c2c;font-size:13px;font-weight:bold;">840,0/0/840,0</div>
<div style="left:270px;top:221px;width:103px;height:20px;background:#ffffff;"></div>
<div style="left:270px;top:241px;width:104px;height:1px;background:#dde2ea;"></div>
<div style="left:373px;top:221px;width:1px;height:20px;background:#dde2ea;"></div>
<div class="t" style="left:274px;top:222px;width:99px;text-align:left;color:#1c1c2c;font-size:13px;font-weight:bold;">840,0/0/840,0</div>
<div style="left:374px;top:221px;width:104px;height:20px;background:#ffffff;"></div>
<div style="left:374px;top:241px;width:105px;height:1px;background:#dde2ea;"></div>
<div style="left:478px;top:221px;width:1px;height:20px;background:#dde2ea;"></div>
<div class="t" style="left:378px;top:222px;width:100px;text-align:left;color:#1c1c2c;font-size:13px;">840,0/0/840,0</div>
<div style="left:479px;top:221px;width:103px;height:20px;background:#ffffff;"></div>
<div style="left:479px;top:241px;width:104px;height:1px;background:#dde2ea;"></div>
<div style="left:582px;top:221px;width:1px;height:20px;background:#dde2ea;"></div>
<div class="t" style="left:483px;top:222px;width:99px;text-align:left;color:#1c1c2c;font-size:13px;">840,0/0/840,0</div>
<div style="left:583px;top:221px;width:103px;height:20px;background:#ffffff;"></div>
<div style="left:583px;top:241px;width:104px;height:1px;background:#dde2ea;"></div>
<div style="left:686px;top:221px;width:1px;height:20px;background:#dde2ea;"></div>
<div class="t" style="left:587px;top:222px;width:99px;text-align:left;color:#1c1c2c;font-size:13px;">840,0/0/840,0</div>
<div style="left:687px;top:221px;width:103px;height:20px;background:#ffffff;"></div>
<div style="left:687px;top:241px;width:104px;height:1px;background:#dde2ea;"></div>
<div style="left:790px;top:221px;width:1px;height:20px;background:#dde2ea;"></div>
<div class="t" style="left:691px;top:222px;width:99px;text-align:left;color:#1c1c2c;font-size:13px;">840,0/0/840,0</div>
<div style="left:791px;top:221px;width:103px;height:20px;background:#ffffff;"></div>
<div style="left:791px;top:241px;width:104px;height:1px;background:#dde2ea;"></div>
<div style="left:894px;top:221px;width:1px;height:20px;background:#dde2ea;"></div>
<div class="t" style="left:795px;top:222px;width:99px;text-align:left;color:#1c1c2c;font-size:13px;">840,0/0/840,0</div>
<div style="left:895px;top:221px;width:103px;height:20px;background:#ffffff;"></div>
<div style="left:895px;top:241px;width:104px;height:1px;background:#dde2ea;"></div>
<div style="left:998px;top:221px;width:1px;height:20px;background:#dde2ea;"></div>
<div class="t" style="left:899px;top:222px;width:99px;text-align:left;color:#1c1c2c;font-size:13px;">840,0/0/840,0</div>
<div style="left:999px;top:221px;width:103px;height:20px;background:#ffffff;"></div>
<div style="left:999px;top:241px;width:104px;height:1px;background:#dde2ea;"></div>
<div style="left:1102px;top:221px;width:1px;height:20px;background:#dde2ea;"></div>
<div class="t" style="left:1003px;top:222px;width:99px;text-align:left;color:#1c1c2c;font-size:13px;">840,0/0/840,0</div>
<div style="left:1103px;top:221px;width:103px;height:20px;background:#ffffff;"></div>
<div style="left:1103px;top:241px;width:104px;height:1px;background:#dde2ea;"></div>
<div style="left:1206px;top:221px;width:1px;height:20px;background:#dde2ea;"></div>
<div class="t" style="left:1107px;top:222px;width:99px;text-align:left;color:#1c1c2c;font-size:13px;">840,0/0/840,0</div>
<div style="left:1207px;top:221px;width:14px;height:20px;background:#ffffff;"></div>
<div style="left:1207px;top:241px;width:14px;height:1px;background:#dde2ea;"></div>
<div class="t" style="left:1211px;top:222px;width:10px;text-align:left;color:#1c1c2c;font-size:13px;">840,0/0/840,0</div>
<div style="left:18px;top:242px;width:15px;height:20px;background:#e3e7ee;"></div>
<div style="left:18px;top:262px;width:15px;height:1px;background:#c3cbd8;"></div>
<div style="left:33px;top:242px;width:1px;height:21px;background:#c3cbd8;"></div>
<div style="left:34px;top:242px;width:130px;height:20px;background:#ffffff;"></div>
<div style="left:34px;top:262px;width:130px;height:1px;background:#dde2ea;"></div>
<div style="left:164px;top:242px;width:2px;height:21px;background:#c8cfdb;"></div>
<div class="t" style="left:38px;top:243px;text-align:left;color:#1c1c2c;font-size:12.5px;">Hall 4/2</div>
<div style="left:166px;top:242px;width:103px;height:20px;background:#ffffff;"></div>
<div style="left:166px;top:262px;width:104px;height:1px;background:#dde2ea;"></div>
<div style="left:269px;top:242px;width:1px;height:20px;background:#dde2ea;"></div>
<div class="t" style="left:170px;top:243px;width:99px;text-align:left;color:#1c1c2c;font-size:13px;font-weight:bold;">890,0/0/890,0</div>
<div style="left:270px;top:242px;width:103px;height:20px;background:#ffffff;"></div>
<div style="left:270px;top:262px;width:104px;height:1px;background:#dde2ea;"></div>
<div style="left:373px;top:242px;width:1px;height:20px;background:#dde2ea;"></div>
<div class="t" style="left:274px;top:243px;width:99px;text-align:left;color:#1c1c2c;font-size:13px;font-weight:bold;">890,0/0/890,0</div>
<div style="left:374px;top:242px;width:104px;height:20px;background:#ffffff;"></div>
<div style="left:374px;top:262px;width:105px;height:1px;background:#dde2ea;"></div>
<div style="left:478px;top:242px;width:1px;height:20px;background:#dde2ea;"></div>
<div class="t" style="left:378px;top:243px;width:100px;text-align:left;color:#1c1c2c;font-size:13px;">890,0/0/890,0</div>
<div style="left:479px;top:242px;width:103px;height:20px;background:#ffffff;"></div>
<div style="left:479px;top:262px;width:104px;height:1px;background:#dde2ea;"></div>
<div style="left:582px;top:242px;width:1px;height:20px;background:#dde2ea;"></div>
<div class="t" style="left:483px;top:243px;width:99px;text-align:left;color:#1c1c2c;font-size:13px;">890,0/0/890,0</div>
<div style="left:583px;top:242px;width:103px;height:20px;background:#ffffff;"></div>
<div style="left:583px;top:262px;width:104px;height:1px;background:#dde2ea;"></div>
<div style="left:686px;top:242px;width:1px;height:20px;background:#dde2ea;"></div>
<div class="t" style="left:587px;top:243px;width:99px;text-align:left;color:#1c1c2c;font-size:13px;">890,0/0/890,0</div>
<div style="left:687px;top:242px;width:103px;height:20px;background:#ffffff;"></div>
<div style="left:687px;top:262px;width:104px;height:1px;background:#dde2ea;"></div>
<div style="left:790px;top:242px;width:1px;height:20px;background:#dde2ea;"></div>
<div class="t" style="left:691px;top:243px;width:99px;text-align:left;color:#1c1c2c;font-size:13px;">890,0/0/890,0</div>
<div style="left:791px;top:242px;width:103px;height:20px;background:#ffffff;"></div>
<div style="left:791px;top:262px;width:104px;height:1px;background:#dde2ea;"></div>
<div style="left:894px;top:242px;width:1px;height:20px;background:#dde2ea;"></div>
<div class="t" style="left:795px;top:243px;width:99px;text-align:left;color:#1c1c2c;font-size:13px;">890,0/0/890,0</div>
<div style="left:895px;top:242px;width:103px;height:20px;background:#ffffff;"></div>
<div style="left:895px;top:262px;width:104px;height:1px;background:#dde2ea;"></div>
<div style="left:998px;top:242px;width:1px;height:20px;background:#dde2ea;"></div>
<div class="t" style="left:899px;top:243px;width:99px;text-align:left;color:#1c1c2c;font-size:13px;">890,0/0/890,0</div>
<div style="left:999px;top:242px;width:103px;height:20px;background:#ffffff;"></div>
<div style="left:999px;top:262px;width:104px;height:1px;background:#dde2ea;"></div>
<div style="left:1102px;top:242px;width:1px;height:20px;background:#dde2ea;"></div>
<div class="t" style="left:1003px;top:243px;width:99px;text-align:left;color:#1c1c2c;font-size:13px;">890,0/0/890,0</div>
<div style="left:1103px;top:242px;width:103px;height:20px;background:#ffffff;"></div>
<div style="left:1103px;top:262px;width:104px;height:1px;background:#dde2ea;"></div>
<div style="left:1206px;top:242px;width:1px;height:20px;background:#dde2ea;"></div>
<div class="t" style="left:1107px;top:243px;width:99px;text-align:left;color:#1c1c2c;font-size:13px;">890,0/0/890,0</div>
<div style="left:1207px;top:242px;width:14px;height:20px;background:#ffffff;"></div>
<div style="left:1207px;top:262px;width:14px;height:1px;background:#dde2ea;"></div>
<div class="t" style="left:1211px;top:243px;width:10px;text-align:left;color:#1c1c2c;font-size:13px;">890,0/0/890,0</div>
<div style="left:18px;top:263px;width:15px;height:20px;background:#e3e7ee;"></div>
<div style="left:18px;top:283px;width:15px;height:1px;background:#c3cbd8;"></div>
<div style="left:33px;top:263px;width:1px;height:21px;background:#c3cbd8;"></div>
<div style="left:34px;top:263px;width:130px;height:20px;background:#ffffff;"></div>
<div style="left:34px;top:283px;width:130px;height:1px;background:#dde2ea;"></div>
<div style="left:164px;top:263px;width:2px;height:21px;background:#c8cfdb;"></div>
<div class="t" style="left:38px;top:264px;text-align:left;color:#1c1c2c;font-size:12.5px;">Hall 5/1</div>
<div style="left:166px;top:263px;width:103px;height:20px;background:#ffffff;"></div>
<div style="left:166px;top:283px;width:104px;height:1px;background:#dde2ea;"></div>
<div style="left:269px;top:263px;width:1px;height:20px;background:#dde2ea;"></div>
<div class="t" style="left:170px;top:264px;width:99px;text-align:left;color:#1c1c2c;font-size:13px;font-weight:bold;">890,0/0/890,0</div>
<div style="left:270px;top:263px;width:103px;height:20px;background:#ffffff;"></div>
<div style="left:270px;top:283px;width:104px;height:1px;background:#dde2ea;"></div>
<div style="left:373px;top:263px;width:1px;height:20px;background:#dde2ea;"></div>
<div class="t" style="left:274px;top:264px;width:99px;text-align:left;color:#1c1c2c;font-size:13px;font-weight:bold;">890,0/0/890,0</div>
<div style="left:374px;top:263px;width:104px;height:20px;background:#ffffff;"></div>
<div style="left:374px;top:283px;width:105px;height:1px;background:#dde2ea;"></div>
<div style="left:478px;top:263px;width:1px;height:20px;background:#dde2ea;"></div>
<div class="t" style="left:378px;top:264px;width:100px;text-align:left;color:#1c1c2c;font-size:13px;">890,0/0/890,0</div>
<div style="left:479px;top:263px;width:103px;height:20px;background:#ffffff;"></div>
<div style="left:479px;top:283px;width:104px;height:1px;background:#dde2ea;"></div>
<div style="left:582px;top:263px;width:1px;height:20px;background:#dde2ea;"></div>
<div class="t" style="left:483px;top:264px;width:99px;text-align:left;color:#1c1c2c;font-size:13px;">890,0/0/890,0</div>
<div style="left:583px;top:263px;width:103px;height:20px;background:#ffffff;"></div>
<div style="left:583px;top:283px;width:104px;height:1px;background:#dde2ea;"></div>
<div style="left:686px;top:263px;width:1px;height:20px;background:#dde2ea;"></div>
<div class="t" style="left:587px;top:264px;width:99px;text-align:left;color:#1c1c2c;font-size:13px;">890,0/0/890,0</div>
<div style="left:687px;top:263px;width:103px;height:20px;background:#ffffff;"></div>
<div style="left:687px;top:283px;width:104px;height:1px;background:#dde2ea;"></div>
<div style="left:790px;top:263px;width:1px;height:20px;background:#dde2ea;"></div>
<div class="t" style="left:691px;top:264px;width:99px;text-align:left;color:#1c1c2c;font-size:13px;">890,0/0/890,0</div>
<div style="left:791px;top:263px;width:103px;height:20px;background:#ffffff;"></div>
<div style="left:791px;top:283px;width:104px;height:1px;background:#dde2ea;"></div>
<div style="left:894px;top:263px;width:1px;height:20px;background:#dde2ea;"></div>
<div class="t" style="left:795px;top:264px;width:99px;text-align:left;color:#1c1c2c;font-size:13px;">890,0/0/890,0</div>
<div style="left:895px;top:263px;width:103px;height:20px;background:#ffffff;"></div>
<div style="left:895px;top:283px;width:104px;height:1px;background:#dde2ea;"></div>
<div style="left:998px;top:263px;width:1px;height:20px;background:#dde2ea;"></div>
<div class="t" style="left:899px;top:264px;width:99px;text-align:left;color:#1c1c2c;font-size:13px;">890,0/0/890,0</div>
<div style="left:999px;top:263px;width:103px;height:20px;background:#ffffff;"></div>
<div style="left:999px;top:283px;width:104px;height:1px;background:#dde2ea;"></div>
<div style="left:1102px;top:263px;width:1px;height:20px;background:#dde2ea;"></div>
<div class="t" style="left:1003px;top:264px;width:99px;text-align:left;color:#1c1c2c;font-size:13px;">890,0/0/890,0</div>
<div style="left:1103px;top:263px;width:103px;height:20px;background:#ffffff;"></div>
<div style="left:1103px;top:283px;width:104px;height:1px;background:#dde2ea;"></div>
<div style="left:1206px;top:263px;width:1px;height:20px;background:#dde2ea;"></div>
<div class="t" style="left:1107px;top:264px;width:99px;text-align:left;color:#1c1c2c;font-size:13px;">890,0/0/890,0</div>
<div style="left:1207px;top:263px;width:14px;height:20px;background:#ffffff;"></div>
<div style="left:1207px;top:283px;width:14px;height:1px;background:#dde2ea;"></div>
<div class="t" style="left:1211px;top:264px;width:10px;text-align:left;color:#1c1c2c;font-size:13px;">890,0/0/890,0</div>
<div style="left:18px;top:284px;width:15px;height:20px;background:#e3e7ee;"></div>
<div style="left:18px;top:304px;width:15px;height:1px;background:#c3cbd8;"></div>
<div style="left:33px;top:284px;width:1px;height:21px;background:#c3cbd8;"></div>
<div style="left:34px;top:284px;width:130px;height:20px;background:#ffffff;"></div>
<div style="left:34px;top:304px;width:130px;height:1px;background:#dde2ea;"></div>
<div style="left:164px;top:284px;width:2px;height:21px;background:#c8cfdb;"></div>
<div class="t" style="left:38px;top:285px;text-align:left;color:#1c1c2c;font-size:12.5px;">Hall 5/2</div>
<div style="left:166px;top:284px;width:103px;height:20px;background:#ffffff;"></div>
<div style="left:166px;top:304px;width:104px;height:1px;background:#dde2ea;"></div>
<div style="left:269px;top:284px;width:1px;height:20px;background:#dde2ea;"></div>
<div class="t" style="left:170px;top:285px;width:99px;text-align:left;color:#1c1c2c;font-size:13px;font-weight:bold;">820,0/0/820,0</div>
<div style="left:270px;top:284px;width:103px;height:20px;background:#ffffff;"></div>
<div style="left:270px;top:304px;width:104px;height:1px;background:#dde2ea;"></div>
<div style="left:373px;top:284px;width:1px;height:20px;background:#dde2ea;"></div>
<div class="t" style="left:274px;top:285px;width:99px;text-align:left;color:#1c1c2c;font-size:13px;font-weight:bold;">820,0/0/820,0</div>
<div style="left:374px;top:284px;width:104px;height:20px;background:#ffffff;"></div>
<div style="left:374px;top:304px;width:105px;height:1px;background:#dde2ea;"></div>
<div style="left:478px;top:284px;width:1px;height:20px;background:#dde2ea;"></div>
<div class="t" style="left:378px;top:285px;width:100px;text-align:left;color:#1c1c2c;font-size:13px;">820,0/0/820,0</div>
<div style="left:479px;top:284px;width:103px;height:20px;background:#ffffff;"></div>
<div style="left:479px;top:304px;width:104px;height:1px;background:#dde2ea;"></div>
<div style="left:582px;top:284px;width:1px;height:20px;background:#dde2ea;"></div>
<div class="t" style="left:483px;top:285px;width:99px;text-align:left;color:#1c1c2c;font-size:13px;">820,0/0/820,0</div>
<div style="left:583px;top:284px;width:103px;height:20px;background:#ffffff;"></div>
<div style="left:583px;top:304px;width:104px;height:1px;background:#dde2ea;"></div>
<div style="left:686px;top:284px;width:1px;height:20px;background:#dde2ea;"></div>
<div class="t" style="left:587px;top:285px;width:99px;text-align:left;color:#1c1c2c;font-size:13px;">820,0/0/820,0</div>
<div style="left:687px;top:284px;width:103px;height:20px;background:#ffffff;"></div>
<div style="left:687px;top:304px;width:104px;height:1px;background:#dde2ea;"></div>
<div style="left:790px;top:284px;width:1px;height:20px;background:#dde2ea;"></div>
<div class="t" style="left:691px;top:285px;width:99px;text-align:left;color:#1c1c2c;font-size:13px;">820,0/0/820,0</div>
<div style="left:791px;top:284px;width:103px;height:20px;background:#ffffff;"></div>
<div style="left:791px;top:304px;width:104px;height:1px;background:#dde2ea;"></div>
<div style="left:894px;top:284px;width:1px;height:20px;background:#dde2ea;"></div>
<div class="t" style="left:795px;top:285px;width:99px;text-align:left;color:#1c1c2c;font-size:13px;">820,0/0/820,0</div>
<div style="left:895px;top:284px;width:103px;height:20px;background:#ffffff;"></div>
<div style="left:895px;top:304px;width:104px;height:1px;background:#dde2ea;"></div>
<div style="left:998px;top:284px;width:1px;height:20px;background:#dde2ea;"></div>
<div class="t" style="left:899px;top:285px;width:99px;text-align:left;color:#1c1c2c;font-size:13px;">820,0/0/820,0</div>
<div style="left:999px;top:284px;width:103px;height:20px;background:#ffffff;"></div>
<div style="left:999px;top:304px;width:104px;height:1px;background:#dde2ea;"></div>
<div style="left:1102px;top:284px;width:1px;height:20px;background:#dde2ea;"></div>
<div class="t" style="left:1003px;top:285px;width:99px;text-align:left;color:#1c1c2c;font-size:13px;">820,0/0/820,0</div>
<div style="left:1103px;top:284px;width:103px;height:20px;background:#ffffff;"></div>
<div style="left:1103px;top:304px;width:104px;height:1px;background:#dde2ea;"></div>
<div style="left:1206px;top:284px;width:1px;height:20px;background:#dde2ea;"></div>
<div class="t" style="left:1107px;top:285px;width:99px;text-align:left;color:#1c1c2c;font-size:13px;">820,0/0/820,0</div>
<div style="left:1207px;top:284px;width:14px;height:20px;background:#ffffff;"></div>
<div style="left:1207px;top:304px;width:14px;height:1px;background:#dde2ea;"></div>
<div class="t" style="left:1211px;top:285px;width:10px;text-align:left;color:#1c1c2c;font-size:13px;">820,0/0/820,0</div>
<div style="left:18px;top:305px;width:15px;height:20px;background:#e3e7ee;"></div>
<div style="left:18px;top:325px;width:15px;height:1px;background:#c3cbd8;"></div>
<div style="left:33px;top:305px;width:1px;height:21px;background:#c3cbd8;"></div>
<div style="left:34px;top:305px;width:130px;height:20px;background:#ffffff;"></div>
<div style="left:34px;top:325px;width:130px;height:1px;background:#dde2ea;"></div>
<div style="left:164px;top:305px;width:2px;height:21px;background:#c8cfdb;"></div>
<div class="t" style="left:38px;top:306px;text-align:left;color:#1c1c2c;font-size:12.5px;">Hall MP</div>
<div style="left:166px;top:305px;width:103px;height:20px;background:#ffffff;"></div>
<div style="left:166px;top:325px;width:104px;height:1px;background:#dde2ea;"></div>
<div style="left:269px;top:305px;width:1px;height:20px;background:#dde2ea;"></div>
<div class="t" style="left:170px;top:306px;width:99px;text-align:left;color:#1c1c2c;font-size:13px;font-weight:bold;">75,0/70,0/5,0</div>
<div style="left:270px;top:305px;width:103px;height:20px;background:#ffffff;"></div>
<div style="left:270px;top:325px;width:104px;height:1px;background:#dde2ea;"></div>
<div style="left:373px;top:305px;width:1px;height:20px;background:#dde2ea;"></div>
<div class="t" style="left:274px;top:306px;width:99px;text-align:left;color:#1c1c2c;font-size:13px;font-weight:bold;">75,0/70,0/5,0</div>
<div style="left:374px;top:305px;width:104px;height:20px;background:#ffffff;"></div>
<div style="left:374px;top:325px;width:105px;height:1px;background:#dde2ea;"></div>
<div style="left:478px;top:305px;width:1px;height:20px;background:#dde2ea;"></div>
<div class="t" style="left:378px;top:306px;width:100px;text-align:left;color:#ee0000;font-size:13px;">75,0/100,0/-25,0</div>
<div style="left:479px;top:305px;width:103px;height:20px;background:#ffffff;"></div>
<div style="left:479px;top:325px;width:104px;height:1px;background:#dde2ea;"></div>
<div style="left:582px;top:305px;width:1px;height:20px;background:#dde2ea;"></div>
<div class="t" style="left:483px;top:306px;width:99px;text-align:left;color:#1c1c2c;font-size:13px;">75,0/70,0/5,0</div>
<div style="left:583px;top:305px;width:103px;height:20px;background:#ffffff;"></div>
<div style="left:583px;top:325px;width:104px;height:1px;background:#dde2ea;"></div>
<div style="left:686px;top:305px;width:1px;height:20px;background:#dde2ea;"></div>
<div class="t" style="left:587px;top:306px;width:99px;text-align:left;color:#1c1c2c;font-size:13px;">75,0/70,0/5,0</div>
<div style="left:687px;top:305px;width:103px;height:20px;background:#ffffff;"></div>
<div style="left:687px;top:325px;width:104px;height:1px;background:#dde2ea;"></div>
<div style="left:790px;top:305px;width:1px;height:20px;background:#dde2ea;"></div>
<div class="t" style="left:691px;top:306px;width:99px;text-align:left;color:#1c1c2c;font-size:13px;">75,0/70,0/5,0</div>
<div style="left:791px;top:305px;width:103px;height:20px;background:#ffffff;"></div>
<div style="left:791px;top:325px;width:104px;height:1px;background:#dde2ea;"></div>
<div style="left:894px;top:305px;width:1px;height:20px;background:#dde2ea;"></div>
<div class="t" style="left:795px;top:306px;width:99px;text-align:left;color:#1c1c2c;font-size:13px;">75,0/70,0/5,0</div>
<div style="left:895px;top:305px;width:103px;height:20px;background:#ffffff;"></div>
<div style="left:895px;top:325px;width:104px;height:1px;background:#dde2ea;"></div>
<div style="left:998px;top:305px;width:1px;height:20px;background:#dde2ea;"></div>
<div class="t" style="left:899px;top:306px;width:99px;text-align:left;color:#1c1c2c;font-size:13px;">75,0/70,0/5,0</div>
<div style="left:999px;top:305px;width:103px;height:20px;background:#ffffff;"></div>
<div style="left:999px;top:325px;width:104px;height:1px;background:#dde2ea;"></div>
<div style="left:1102px;top:305px;width:1px;height:20px;background:#dde2ea;"></div>
<div class="t" style="left:1003px;top:306px;width:99px;text-align:left;color:#1c1c2c;font-size:13px;">75,0/70,0/5,0</div>
<div style="left:1103px;top:305px;width:103px;height:20px;background:#ffffff;"></div>
<div style="left:1103px;top:325px;width:104px;height:1px;background:#dde2ea;"></div>
<div style="left:1206px;top:305px;width:1px;height:20px;background:#dde2ea;"></div>
<div class="t" style="left:1107px;top:306px;width:99px;text-align:left;color:#1c1c2c;font-size:13px;">75,0/70,0/5,0</div>
<div style="left:1207px;top:305px;width:14px;height:20px;background:#ffffff;"></div>
<div style="left:1207px;top:325px;width:14px;height:1px;background:#dde2ea;"></div>
<div class="t" style="left:1211px;top:306px;width:10px;text-align:left;color:#1c1c2c;font-size:13px;">75,0/70,0/5,0</div>
<div style="left:18px;top:326px;width:15px;height:20px;background:#e3e7ee;"></div>
<div style="left:18px;top:346px;width:15px;height:1px;background:#c3cbd8;"></div>
<div style="left:33px;top:326px;width:1px;height:21px;background:#c3cbd8;"></div>
<div style="left:34px;top:326px;width:130px;height:20px;background:#ffffff;"></div>
<div style="left:34px;top:346px;width:130px;height:1px;background:#dde2ea;"></div>
<div style="left:164px;top:326px;width:2px;height:21px;background:#c8cfdb;"></div>
<div class="t" style="left:38px;top:327px;text-align:left;color:#1c1c2c;font-size:12.5px;">Paint shop</div>
<div style="left:166px;top:326px;width:103px;height:20px;background:#ffffff;"></div>
<div style="left:166px;top:346px;width:104px;height:1px;background:#dde2ea;"></div>
<div style="left:269px;top:326px;width:1px;height:20px;background:#dde2ea;"></div>
<div class="t" style="left:170px;top:327px;width:99px;text-align:left;color:#1c1c2c;font-size:13px;font-weight:bold;">605,0/0/605,0</div>
<div style="left:270px;top:326px;width:103px;height:20px;background:#ffffff;"></div>
<div style="left:270px;top:346px;width:104px;height:1px;background:#dde2ea;"></div>
<div style="left:373px;top:326px;width:1px;height:20px;background:#dde2ea;"></div>
<div class="t" style="left:274px;top:327px;width:99px;text-align:left;color:#1c1c2c;font-size:13px;font-weight:bold;">605,0/0/605,0</div>
<div style="left:374px;top:326px;width:104px;height:20px;background:#ffffff;"></div>
<div style="left:374px;top:346px;width:105px;height:1px;background:#dde2ea;"></div>
<div style="left:478px;top:326px;width:1px;height:20px;background:#dde2ea;"></div>
<div class="t" style="left:378px;top:327px;width:100px;text-align:left;color:#1c1c2c;font-size:13px;">605,0/0/605,0</div>
<div style="left:479px;top:326px;width:103px;height:20px;background:#ffffff;"></div>
<div style="left:479px;top:346px;width:104px;height:1px;background:#dde2ea;"></div>
<div style="left:582px;top:326px;width:1px;height:20px;background:#dde2ea;"></div>
<div class="t" style="left:483px;top:327px;width:99px;text-align:left;color:#1c1c2c;font-size:13px;">605,0/0/605,0</div>
<div style="left:583px;top:326px;width:103px;height:20px;background:#ffffff;"></div>
<div style="left:583px;top:346px;width:104px;height:1px;background:#dde2ea;"></div>
<div style="left:686px;top:326px;width:1px;height:20px;background:#dde2ea;"></div>
<div class="t" style="left:587px;top:327px;width:99px;text-align:left;color:#1c1c2c;font-size:13px;">605,0/0/605,0</div>
<div style="left:687px;top:326px;width:103px;height:20px;background:#ffffff;"></div>
<div style="left:687px;top:346px;width:104px;height:1px;background:#dde2ea;"></div>
<div style="left:790px;top:326px;width:1px;height:20px;background:#dde2ea;"></div>
<div class="t" style="left:691px;top:327px;width:99px;text-align:left;color:#1c1c2c;font-size:13px;">605,0/0/605,0</div>
<div style="left:791px;top:326px;width:103px;height:20px;background:#ffffff;"></div>
<div style="left:791px;top:346px;width:104px;height:1px;background:#dde2ea;"></div>
<div style="left:894px;top:326px;width:1px;height:20px;background:#dde2ea;"></div>
<div class="t" style="left:795px;top:327px;width:99px;text-align:left;color:#1c1c2c;font-size:13px;">605,0/0/605,0</div>
<div style="left:895px;top:326px;width:103px;height:20px;background:#ffffff;"></div>
<div style="left:895px;top:346px;width:104px;height:1px;background:#dde2ea;"></div>
<div style="left:998px;top:326px;width:1px;height:20px;background:#dde2ea;"></div>
<div class="t" style="left:899px;top:327px;width:99px;text-align:left;color:#1c1c2c;font-size:13px;">605,0/0/605,0</div>
<div style="left:999px;top:326px;width:103px;height:20px;background:#ffffff;"></div>
<div style="left:999px;top:346px;width:104px;height:1px;background:#dde2ea;"></div>
<div style="left:1102px;top:326px;width:1px;height:20px;background:#dde2ea;"></div>
<div class="t" style="left:1003px;top:327px;width:99px;text-align:left;color:#1c1c2c;font-size:13px;">605,0/0/605,0</div>
<div style="left:1103px;top:326px;width:103px;height:20px;background:#ffffff;"></div>
<div style="left:1103px;top:346px;width:104px;height:1px;background:#dde2ea;"></div>
<div style="left:1206px;top:326px;width:1px;height:20px;background:#dde2ea;"></div>
<div class="t" style="left:1107px;top:327px;width:99px;text-align:left;color:#1c1c2c;font-size:13px;">605,0/0/605,0</div>
<div style="left:1207px;top:326px;width:14px;height:20px;background:#ffffff;"></div>
<div style="left:1207px;top:346px;width:14px;height:1px;background:#dde2ea;"></div>
<div class="t" style="left:1211px;top:327px;width:10px;text-align:left;color:#1c1c2c;font-size:13px;">605,0/0/605,0</div>
<div style="left:18px;top:347px;width:15px;height:20px;background:#e3e7ee;"></div>
<div style="left:18px;top:367px;width:15px;height:1px;background:#c3cbd8;"></div>
<div style="left:33px;top:347px;width:1px;height:21px;background:#c3cbd8;"></div>
<div style="left:34px;top:347px;width:130px;height:20px;background:#ffffff;"></div>
<div style="left:34px;top:367px;width:130px;height:1px;background:#dde2ea;"></div>
<div style="left:164px;top:347px;width:2px;height:21px;background:#c8cfdb;"></div>
<div class="t" style="left:38px;top:348px;text-align:left;color:#1c1c2c;font-size:12.5px;">Welding Robot 1</div>
<div style="left:166px;top:347px;width:103px;height:20px;background:#ffffff;"></div>
<div style="left:166px;top:367px;width:104px;height:1px;background:#dde2ea;"></div>
<div style="left:269px;top:347px;width:1px;height:20px;background:#dde2ea;"></div>
<div class="t" style="left:170px;top:348px;width:99px;text-align:left;color:#1c1c2c;font-size:13px;font-weight:bold;">75,0/50,0/25,0</div>
<div style="left:270px;top:347px;width:103px;height:20px;background:#ffffff;"></div>
<div style="left:270px;top:367px;width:104px;height:1px;background:#dde2ea;"></div>
<div style="left:373px;top:347px;width:1px;height:20px;background:#dde2ea;"></div>
<div class="t" style="left:274px;top:348px;width:99px;text-align:left;color:#ee0000;font-size:13px;font-weight:bold;">75,0/80,0/-5,0</div>
<div style="left:374px;top:347px;width:104px;height:20px;background:#ffffff;"></div>
<div style="left:374px;top:367px;width:105px;height:1px;background:#dde2ea;"></div>
<div style="left:478px;top:347px;width:1px;height:20px;background:#dde2ea;"></div>
<div class="t" style="left:378px;top:348px;width:100px;text-align:left;color:#1c1c2c;font-size:13px;">75,0/50,0/25,0</div>
<div style="left:479px;top:347px;width:103px;height:20px;background:#ffffff;"></div>
<div style="left:479px;top:367px;width:104px;height:1px;background:#dde2ea;"></div>
<div style="left:582px;top:347px;width:1px;height:20px;background:#dde2ea;"></div>
<div class="t" style="left:483px;top:348px;width:99px;text-align:left;color:#1c1c2c;font-size:13px;">75,0/50,0/25,0</div>
<div style="left:583px;top:347px;width:103px;height:20px;background:#ffffff;"></div>
<div style="left:583px;top:367px;width:104px;height:1px;background:#dde2ea;"></div>
<div style="left:686px;top:347px;width:1px;height:20px;background:#dde2ea;"></div>
<div class="t" style="left:587px;top:348px;width:99px;text-align:left;color:#1c1c2c;font-size:13px;">75,0/50,0/25,0</div>
<div style="left:687px;top:347px;width:103px;height:20px;background:#ffffff;"></div>
<div style="left:687px;top:367px;width:104px;height:1px;background:#dde2ea;"></div>
<div style="left:790px;top:347px;width:1px;height:20px;background:#dde2ea;"></div>
<div class="t" style="left:691px;top:348px;width:99px;text-align:left;color:#1c1c2c;font-size:13px;">75,0/50,0/25,0</div>
<div style="left:791px;top:347px;width:103px;height:20px;background:#ffffff;"></div>
<div style="left:791px;top:367px;width:104px;height:1px;background:#dde2ea;"></div>
<div style="left:894px;top:347px;width:1px;height:20px;background:#dde2ea;"></div>
<div class="t" style="left:795px;top:348px;width:99px;text-align:left;color:#1c1c2c;font-size:13px;">75,0/50,0/25,0</div>
<div style="left:895px;top:347px;width:103px;height:20px;background:#ffffff;"></div>
<div style="left:895px;top:367px;width:104px;height:1px;background:#dde2ea;"></div>
<div style="left:998px;top:347px;width:1px;height:20px;background:#dde2ea;"></div>
<div class="t" style="left:899px;top:348px;width:99px;text-align:left;color:#ee0000;font-size:13px;">75,0/80,0/-5,0</div>
<div style="left:999px;top:347px;width:103px;height:20px;background:#ffffff;"></div>
<div style="left:999px;top:367px;width:104px;height:1px;background:#dde2ea;"></div>
<div style="left:1102px;top:347px;width:1px;height:20px;background:#dde2ea;"></div>
<div class="t" style="left:1003px;top:348px;width:99px;text-align:left;color:#1c1c2c;font-size:13px;">75,0/50,0/25,0</div>
<div style="left:1103px;top:347px;width:103px;height:20px;background:#ffffff;"></div>
<div style="left:1103px;top:367px;width:104px;height:1px;background:#dde2ea;"></div>
<div style="left:1206px;top:347px;width:1px;height:20px;background:#dde2ea;"></div>
<div class="t" style="left:1107px;top:348px;width:99px;text-align:left;color:#1c1c2c;font-size:13px;">75,0/50,0/25,0</div>
<div style="left:1207px;top:347px;width:14px;height:20px;background:#ffffff;"></div>
<div style="left:1207px;top:367px;width:14px;height:1px;background:#dde2ea;"></div>
<div class="t" style="left:1211px;top:348px;width:10px;text-align:left;color:#1c1c2c;font-size:13px;">75,0/50,0/25,0</div>
<div style="left:18px;top:368px;width:15px;height:20px;background:#e3e7ee;"></div>
<div style="left:18px;top:388px;width:15px;height:1px;background:#c3cbd8;"></div>
<div style="left:33px;top:368px;width:1px;height:21px;background:#c3cbd8;"></div>
<div style="left:34px;top:368px;width:130px;height:20px;background:#ffffff;"></div>
<div style="left:34px;top:388px;width:130px;height:1px;background:#dde2ea;"></div>
<div style="left:164px;top:368px;width:2px;height:21px;background:#c8cfdb;"></div>
<div class="t" style="left:38px;top:369px;text-align:left;color:#1c1c2c;font-size:12.5px;">Welding Robot 2</div>
<div style="left:166px;top:368px;width:103px;height:20px;background:#ffffff;"></div>
<div style="left:166px;top:388px;width:104px;height:1px;background:#dde2ea;"></div>
<div style="left:269px;top:368px;width:1px;height:20px;background:#dde2ea;"></div>
<div class="t" style="left:170px;top:369px;width:99px;text-align:left;color:#1c1c2c;font-size:13px;font-weight:bold;">75,0/0/75,0</div>
<div style="left:270px;top:368px;width:103px;height:20px;background:#ffffff;"></div>
<div style="left:270px;top:388px;width:104px;height:1px;background:#dde2ea;"></div>
<div style="left:373px;top:368px;width:1px;height:20px;background:#dde2ea;"></div>
<div class="t" style="left:274px;top:369px;width:99px;text-align:left;color:#1c1c2c;font-size:13px;font-weight:bold;">75,0/0/75,0</div>
<div style="left:374px;top:368px;width:104px;height:20px;background:#ffffff;"></div>
<div style="left:374px;top:388px;width:105px;height:1px;background:#dde2ea;"></div>
<div style="left:478px;top:368px;width:1px;height:20px;background:#dde2ea;"></div>
<div class="t" style="left:378px;top:369px;width:100px;text-align:left;color:#1c1c2c;font-size:13px;">75,0/0/75,0</div>
<div style="left:479px;top:368px;width:103px;height:20px;background:#ffffff;"></div>
<div style="left:479px;top:388px;width:104px;height:1px;background:#dde2ea;"></div>
<div style="left:582px;top:368px;width:1px;height:20px;background:#dde2ea;"></div>
<div class="t" style="left:483px;top:369px;width:99px;text-align:left;color:#1c1c2c;font-size:13px;">75,0/0/75,0</div>
<div style="left:583px;top:368px;width:103px;height:20px;background:#ffffff;"></div>
<div style="left:583px;top:388px;width:104px;height:1px;background:#dde2ea;"></div>
<div style="left:686px;top:368px;width:1px;height:20px;background:#dde2ea;"></div>
<div class="t" style="left:587px;top:369px;width:99px;text-align:left;color:#1c1c2c;font-size:13px;">75,0/0/75,0</div>
<div style="left:687px;top:368px;width:103px;height:20px;background:#ffffff;"></div>
<div style="left:687px;top:388px;width:104px;height:1px;background:#dde2ea;"></div>
<div style="left:790px;top:368px;width:1px;height:20px;background:#dde2ea;"></div>
<div class="t" style="left:691px;top:369px;width:99px;text-align:left;color:#1c1c2c;font-size:13px;">75,0/0/75,0</div>
<div style="left:791px;top:368px;width:103px;height:20px;background:#ffffff;"></div>
<div style="left:791px;top:388px;width:104px;height:1px;background:#dde2ea;"></div>
<div style="left:894px;top:368px;width:1px;height:20px;background:#dde2ea;"></div>
<div class="t" style="left:795px;top:369px;width:99px;text-align:left;color:#1c1c2c;font-size:13px;">75,0/0/75,0</div>
<div style="left:895px;top:368px;width:103px;height:20px;background:#ffffff;"></div>
<div style="left:895px;top:388px;width:104px;height:1px;background:#dde2ea;"></div>
<div style="left:998px;top:368px;width:1px;height:20px;background:#dde2ea;"></div>
<div class="t" style="left:899px;top:369px;width:99px;text-align:left;color:#1c1c2c;font-size:13px;">75,0/0/75,0</div>
<div style="left:999px;top:368px;width:103px;height:20px;background:#ffffff;"></div>
<div style="left:999px;top:388px;width:104px;height:1px;background:#dde2ea;"></div>
<div style="left:1102px;top:368px;width:1px;height:20px;background:#dde2ea;"></div>
<div class="t" style="left:1003px;top:369px;width:99px;text-align:left;color:#1c1c2c;font-size:13px;">75,0/0/75,0</div>
<div style="left:1103px;top:368px;width:103px;height:20px;background:#ffffff;"></div>
<div style="left:1103px;top:388px;width:104px;height:1px;background:#dde2ea;"></div>
<div style="left:1206px;top:368px;width:1px;height:20px;background:#dde2ea;"></div>
<div class="t" style="left:1107px;top:369px;width:99px;text-align:left;color:#1c1c2c;font-size:13px;">75,0/0/75,0</div>
<div style="left:1207px;top:368px;width:14px;height:20px;background:#ffffff;"></div>
<div style="left:1207px;top:388px;width:14px;height:1px;background:#dde2ea;"></div>
<div class="t" style="left:1211px;top:369px;width:10px;text-align:left;color:#1c1c2c;font-size:13px;">75,0/0/75,0</div>
<svg style="position:absolute;left:24px;top:81px" width="5" height="8" viewBox="0 0 5 8"><path d="M0 0 L4.5 4 L0 8 Z" fill="#1a2030"/></svg>
<div style="left:18px;top:398px;width:1203px;height:1px;background:#b8c0cc;"></div>
<div style="left:18px;top:399px;width:1203px;height:29px;background:linear-gradient(#eceef2 0px,#eceef2 7px,#e4e7ec 8px,#e3e6eb 14px,#dcdfe6 15px,#dadee5 29px);"></div>
<div style="left:18px;top:428px;width:1203px;height:17px;background:#e9eaed;"></div>
<div style="left:18px;top:428px;width:1203px;height:1px;background:#f3f3f4;"></div>
<div style="left:18px;top:428px;width:53px;height:17px;background:linear-gradient(#f6f7f9 0px,#eceef2 6px,#d3d8df 16px);"></div>
<div style="left:71px;top:428px;width:87px;height:17px;background:#ffffff;"></div>
<div style="left:158px;top:428px;width:51px;height:17px;background:linear-gradient(#f6f7f9 0px,#eceef2 6px,#d3d8df 16px);"></div>
<div class="t" style="left:78px;top:427px;font-size:11px;color:#1c1c2c;line-height:20px">Record 1 of 15</div>
<svg style="position:absolute;left:22px;top:433px" width="9" height="7" viewBox="0 0 9 7"><path d="M0 0 H1.6 V7 H0 Z M1.6 3.5 L5.3 0 V7 Z M5.3 3.5 L9 0 V7 Z" fill="#6e6e6e"/></svg>
<svg style="position:absolute;left:40px;top:433px" width="8" height="7" viewBox="0 0 8 7"><path d="M0 3.5 L4 0 V7 Z M4 3.5 L8 0 V7 Z" fill="#6e6e6e"/></svg>
<svg style="position:absolute;left:60px;top:433px" width="4" height="7" viewBox="0 0 4 7"><path d="M0 3.5 L4 0 V7 Z" fill="#6e6e6e"/></svg>
<svg style="position:absolute;left:165px;top:433px" width="4" height="7" viewBox="0 0 4 7"><path d="M4 3.5 L0 0 V7 Z" fill="#1a1a2a"/></svg>
<svg style="position:absolute;left:180px;top:433px" width="8" height="7" viewBox="0 0 8 7"><path d="M8 3.5 L4 0 V7 Z M4 3.5 L0 0 V7 Z" fill="#1a1a2a"/></svg>
<svg style="position:absolute;left:197px;top:433px" width="9" height="7" viewBox="0 0 9 7"><path d="M9 0 H7.4 V7 H9 Z M7.4 3.5 L3.7 0 V7 Z M3.7 3.5 L0 0 V7 Z" fill="#1a1a2a"/></svg>
<svg style="position:absolute;left:215px;top:433px" width="5" height="7" viewBox="0 0 5 7"><path d="M4.5 0 V7 L0.5 3.5 Z" fill="#a8aeb8"/></svg>
<div style="left:226px;top:429px;width:159px;height:15px;box-sizing:border-box;border:1px solid #a9b0bb;border-radius:2px;background:linear-gradient(#f7f8fa,#e9ecf0 50%,#d9dde4 51%,#d5d9e0);"></div>
<div style="left:301px;top:433px;width:2px;height:7px;background:#6f7a8a;"></div>
<div style="left:304px;top:433px;width:2px;height:7px;background:#6f7a8a;"></div>
<div style="left:307px;top:433px;width:2px;height:7px;background:#6f7a8a;"></div>
<svg style="position:absolute;left:1211px;top:433px" width="5" height="7" viewBox="0 0 5 7"><path d="M0.5 0 V7 L4.5 3.5 Z" fill="#8d97aa"/></svg>
<div style="left:613px;top:453px;width:2px;height:2px;background:#7b8fb0;"></div>
<div style="left:617px;top:453px;width:2px;height:2px;background:#7b8fb0;"></div>
<div style="left:621px;top:453px;width:2px;height:2px;background:#7b8fb0;"></div>
<div style="left:625px;top:453px;width:2px;height:2px;background:#7b8fb0;"></div>
<div style="left:20px;top:459px;width:1204px;height:371px;box-sizing:border-box;border:1px solid #9eaabd;border-radius:2px;"></div>
<div style="left:22px;top:461px;width:1200px;height:367px;box-sizing:border-box;border:1px solid #8591a6;"></div>
<div style="left:23px;top:462px;width:1198px;height:74px;background:#c9d3e3;"></div>
<div style="left:29px;top:472px;width:76px;height:23px;box-sizing:border-box;border:1px solid #b4bfcf;background:linear-gradient(#f2f3f6 0px,#eaedf1 10px,#dde1e8 11px,#dadee6 23px);"></div>
<div class="t" style="left:35px;top:474px;text-align:left;color:#3e485a;font-size:12.5px;">Project</div>
<svg style="position:absolute;left:89px;top:480px" width="9" height="5" viewBox="0 0 9 5"><path d="M0 5 L4.5 0 L9 5 Z" fill="#8c8c8c"/></svg>
<div style="left:111px;top:488px;width:52px;height:23px;box-sizing:border-box;border:1px solid #b4bfcf;background:linear-gradient(#f2f3f6 0px,#eaedf1 10px,#dde1e8 11px,#dadee6 23px);"></div>
<div class="t" style="left:117px;top:490px;text-align:left;color:#3e485a;font-size:12.5px;">PO</div>
<svg style="position:absolute;left:147px;top:496px" width="9" height="5" viewBox="0 0 9 5"><path d="M0 5 L4.5 0 L9 5 Z" fill="#8c8c8c"/></svg>
<div style="left:169px;top:504px;width:103px;height:23px;box-sizing:border-box;border:1px solid #b4bfcf;background:linear-gradient(#f2f3f6 0px,#eaedf1 10px,#dde1e8 11px,#dadee6 23px);"></div>
<div class="t" style="left:175px;top:506px;text-align:left;color:#3e485a;font-size:12.5px;">Work Order</div>
<svg style="position:absolute;left:256px;top:512px" width="9" height="5" viewBox="0 0 9 5"><path d="M0 5 L4.5 0 L9 5 Z" fill="#8c8c8c"/></svg>
<div style="left:67px;top:494px;width:1px;height:5px;background:#8d9ab0;"></div>
<div style="left:67px;top:498px;width:44px;height:1px;background:#8d9ab0;"></div>
<div style="left:137px;top:510px;width:1px;height:5px;background:#8d9ab0;"></div>
<div style="left:137px;top:514px;width:32px;height:1px;background:#8d9ab0;"></div>
<div style="left:23px;top:536px;width:1198px;height:1px;background:#a9b4c5;"></div>
<div style="left:23px;top:537px;width:1198px;height:22px;background:linear-gradient(#f5f6f8 0px,#f5f6f8 1px,#eceef2 1px,#eceef2 6px,#e6e9ee 6px,#e6e9ee 11px,#dde1e8 11px,#dde1e8 22px);"></div>
<div style="left:23px;top:559px;width:1198px;height:1px;background:#b3bccb;"></div>
<div style="left:38px;top:537px;width:1px;height:22px;background:#bfc7d4;"></div>
<div style="left:197px;top:537px;width:1px;height:22px;background:#bfc7d4;"></div>
<div style="left:332px;top:537px;width:1px;height:22px;background:#bfc7d4;"></div>
<div style="left:424px;top:537px;width:1px;height:22px;background:#bfc7d4;"></div>
<div style="left:529px;top:537px;width:1px;height:22px;background:#bfc7d4;"></div>
<div style="left:628px;top:537px;width:1px;height:22px;background:#bfc7d4;"></div>
<div style="left:709px;top:537px;width:2px;height:22px;background:#bfc7d4;"></div>
<div style="left:774px;top:537px;width:1px;height:22px;background:#bfc7d4;"></div>
<div style="left:838px;top:537px;width:1px;height:22px;background:#bfc7d4;"></div>
<div style="left:902px;top:537px;width:1px;height:22px;background:#bfc7d4;"></div>
<div style="left:966px;top:537px;width:1px;height:22px;background:#bfc7d4;"></div>
<div style="left:1030px;top:537px;width:1px;height:22px;background:#bfc7d4;"></div>
<div style="left:1094px;top:537px;width:1px;height:22px;background:#bfc7d4;"></div>
<div style="left:1158px;top:537px;width:1px;height:22px;background:#bfc7d4;"></div>
<div class="t" style="left:43px;top:538px;text-align:left;color:#3e485a;font-size:12.5px;">Resource</div>
<div class="t" style="left:202px;top:538px;text-align:left;color:#3e485a;font-size:12.5px;">Work Order Milestone</div>
<div class="t" style="left:337px;top:538px;text-align:left;color:#3e485a;font-size:12.5px;">Order Index</div>
<div class="t" style="left:429px;top:538px;text-align:left;color:#3e485a;font-size:12.5px;">Hours Planned</div>
<div class="t" style="left:534px;top:538px;text-align:left;color:#3e485a;font-size:12.5px;">Allocated Hours</div>
<div class="t" style="left:633px;top:538px;text-align:left;color:#3e485a;font-size:12.5px;">Hours Spent</div>
<div class="t" style="left:715px;top:538px;text-align:left;color:#3e485a;font-size:12.5px;">2/19</div>
<div class="t" style="left:779px;top:538px;text-align:left;color:#3e485a;font-size:12.5px;">3/19</div>
<div class="t" style="left:843px;top:538px;text-align:left;color:#3e485a;font-size:12.5px;">4/19</div>
<div class="t" style="left:907px;top:538px;text-align:left;color:#3e485a;font-size:12.5px;">5/19</div>
<div class="t" style="left:971px;top:538px;text-align:left;color:#3e485a;font-size:12.5px;">6/19</div>
<div class="t" style="left:1035px;top:538px;text-align:left;color:#3e485a;font-size:12.5px;">7/19</div>
<div class="t" style="left:1099px;top:538px;text-align:left;color:#3e485a;font-size:12.5px;">8/19</div>
<div class="t" style="left:1163px;top:538px;text-align:left;color:#3e485a;font-size:12.5px;">9/19</div>
<svg style="position:absolute;left:411px;top:544px" width="9" height="5" viewBox="0 0 9 5"><path d="M0 5 L4.5 0 L9 5 Z" fill="#8c8c8c"/></svg>
<div style="left:23px;top:560px;width:1198px;height:220px;background:#ffffff;"></div>
<div style="left:23px;top:560px;width:15px;height:20px;background:#e3e7ee;"></div>
<div style="left:23px;top:580px;width:15px;height:1px;background:#c3cbd8;"></div>
<div style="left:23px;top:581px;width:15px;height:20px;background:#e3e7ee;"></div>
<div style="left:23px;top:601px;width:15px;height:1px;background:#c3cbd8;"></div>
<div style="left:23px;top:602px;width:15px;height:20px;background:#e3e7ee;"></div>
<div style="left:23px;top:622px;width:15px;height:1px;background:#c3cbd8;"></div>
<div style="left:23px;top:623px;width:15px;height:20px;background:#e3e7ee;"></div>
<div style="left:23px;top:643px;width:15px;height:1px;background:#c3cbd8;"></div>
<div style="left:23px;top:644px;width:15px;height:20px;background:#e3e7ee;"></div>
<div style="left:23px;top:664px;width:15px;height:1px;background:#c3cbd8;"></div>
<div style="left:23px;top:665px;width:15px;height:20px;background:#e3e7ee;"></div>
<div style="left:23px;top:685px;width:15px;height:1px;background:#c3cbd8;"></div>
<div style="left:38px;top:560px;width:1px;height:126px;background:#c3cbd8;"></div>
<div style="left:39px;top:560px;width:1182px;height:62px;background:#eef0f4;"></div>
<div style="left:59px;top:580px;width:1162px;height:1px;background:#dae0e8;"></div>
<div style="left:80px;top:601px;width:1141px;height:1px;background:#dae0e8;"></div>
<div style="left:101px;top:622px;width:1120px;height:1px;background:#dae0e8;"></div>
<div style="left:59px;top:580px;width:1px;height:106px;background:#dae0e8;"></div>
<div style="left:80px;top:601px;width:1px;height:85px;background:#dae0e8;"></div>
<div style="left:39px;top:622px;width:62px;height:64px;background:#eef0f4;"></div>
<div style="left:59px;top:623px;width:1px;height:63px;background:#dae0e8;"></div>
<div style="left:80px;top:623px;width:1px;height:63px;background:#dae0e8;"></div>
<div style="left:101px;top:622px;width:1px;height:64px;background:#dae0e8;"></div>
<svg style="position:absolute;left:47px;top:567px" width="6" height="6" viewBox="0 0 6 6"><path d="M6 0 V6 H0 Z" fill="#4a5567"/></svg>
<svg style="position:absolute;left:68px;top:588px" width="6" height="6" viewBox="0 0 6 6"><path d="M6 0 V6 H0 Z" fill="#4a5567"/></svg>
<svg style="position:absolute;left:89px;top:609px" width="6" height="6" viewBox="0 0 6 6"><path d="M6 0 V6 H0 Z" fill="#4a5567"/></svg>
<div class="t" style="left:62px;top:561px;text-align:left;color:#3d4859;font-size:13px;font-weight:bold;letter-spacing:0.78px;">Project: A16-46000 (Count=3)</div>
<div class="t" style="left:83px;top:582px;text-align:left;color:#3d4859;font-size:13px;font-weight:bold;letter-spacing:0.59px;">PO: A16-46000-Construction (Count=3)</div>
<div class="t" style="left:104px;top:603px;text-align:left;color:#3d4859;font-size:13px;font-weight:bold;letter-spacing:0.73px;">Work Order: A16-46000-Construction-22-21x/4 (Count=3)</div>
<div style="left:102px;top:623px;width:95px;height:20px;background:#ffffff;"></div>
<div style="left:102px;top:643px;width:96px;height:1px;background:#dde2ea;"></div>
<div style="left:197px;top:623px;width:1px;height:20px;background:#dde2ea;"></div>
<div class="t" style="left:106px;top:624px;width:91px;text-align:left;color:#1c1c2c;font-size:13px;">Hall MP</div>
<div style="left:198px;top:623px;width:134px;height:20px;background:#ffffff;"></div>
<div style="left:198px;top:643px;width:135px;height:1px;background:#dde2ea;"></div>
<div style="left:332px;top:623px;width:1px;height:20px;background:#dde2ea;"></div>
<div class="t" style="left:202px;top:624px;width:130px;text-align:left;color:#1c1c2c;font-size:13px;">Material preparatio...</div>
<div style="left:333px;top:623px;width:91px;height:20px;background:#ffffff;"></div>
<div style="left:333px;top:643px;width:92px;height:1px;background:#dde2ea;"></div>
<div style="left:424px;top:623px;width:1px;height:20px;background:#dde2ea;"></div>
<div class="t" style="left:333px;top:624px;width:88px;text-align:right;color:#1c1c2c;font-size:13px;">10 000</div>
<div style="left:425px;top:623px;width:104px;height:20px;background:#ffffff;"></div>
<div style="left:425px;top:643px;width:105px;height:1px;background:#dde2ea;"></div>
<div style="left:529px;top:623px;width:1px;height:20px;background:#dde2ea;"></div>
<div class="t" style="left:425px;top:624px;width:101px;text-align:right;color:#1c1c2c;font-size:13px;">2 000,00 h</div>
<div style="left:530px;top:623px;width:98px;height:20px;background:#ffffff;"></div>
<div style="left:530px;top:643px;width:99px;height:1px;background:#dde2ea;"></div>
<div style="left:628px;top:623px;width:1px;height:20px;background:#dde2ea;"></div>
<div class="t" style="left:530px;top:624px;width:95px;text-align:right;color:#1c1c2c;font-size:13px;">1 010 h</div>
<div style="left:629px;top:623px;width:80px;height:20px;background:#ffffff;"></div>
<div style="left:629px;top:643px;width:81px;height:1px;background:#dde2ea;"></div>
<div class="t" style="left:629px;top:624px;width:77px;text-align:right;color:#1c1c2c;font-size:13px;"></div>
<div style="left:711px;top:623px;width:63px;height:20px;background:#ffffff;"></div>
<div style="left:711px;top:643px;width:64px;height:1px;background:#dde2ea;"></div>
<div style="left:774px;top:623px;width:1px;height:20px;background:#dde2ea;"></div>
<div class="t" style="left:711px;top:624px;width:60px;text-align:right;color:#1c1c2c;font-size:13px;">70 h</div>
<div style="left:775px;top:623px;width:63px;height:20px;background:#ffffff;"></div>
<div style="left:775px;top:643px;width:64px;height:1px;background:#dde2ea;"></div>
<div style="left:838px;top:623px;width:1px;height:20px;background:#dde2ea;"></div>
<div class="t" style="left:775px;top:624px;width:60px;text-align:right;color:#1c1c2c;font-size:13px;">70 h</div>
<div style="left:839px;top:623px;width:63px;height:20px;background:#ffffff;"></div>
<div style="left:839px;top:643px;width:64px;height:1px;background:#dde2ea;"></div>
<div style="left:902px;top:623px;width:1px;height:20px;background:#dde2ea;"></div>
<div class="t" style="left:839px;top:624px;width:60px;text-align:right;color:#1c1c2c;font-size:13px;">100 h</div>
<div style="left:903px;top:623px;width:63px;height:20px;background:#ffffff;"></div>
<div style="left:903px;top:643px;width:64px;height:1px;background:#dde2ea;"></div>
<div style="left:966px;top:623px;width:1px;height:20px;background:#dde2ea;"></div>
<div class="t" style="left:903px;top:624px;width:60px;text-align:right;color:#1c1c2c;font-size:13px;">70 h</div>
<div style="left:967px;top:623px;width:63px;height:20px;background:#ffffff;"></div>
<div style="left:967px;top:643px;width:64px;height:1px;background:#dde2ea;"></div>
<div style="left:1030px;top:623px;width:1px;height:20px;background:#dde2ea;"></div>
<div class="t" style="left:967px;top:624px;width:60px;text-align:right;color:#1c1c2c;font-size:13px;">70 h</div>
<div style="left:1031px;top:623px;width:63px;height:20px;background:#ffffff;"></div>
<div style="left:1031px;top:643px;width:64px;height:1px;background:#dde2ea;"></div>
<div style="left:1094px;top:623px;width:1px;height:20px;background:#dde2ea;"></div>
<div class="t" style="left:1031px;top:624px;width:60px;text-align:right;color:#1c1c2c;font-size:13px;">70 h</div>
<div style="left:1095px;top:623px;width:63px;height:20px;background:#ffffff;"></div>
<div style="left:1095px;top:643px;width:64px;height:1px;background:#dde2ea;"></div>
<div style="left:1158px;top:623px;width:1px;height:20px;background:#dde2ea;"></div>
<div class="t" style="left:1095px;top:624px;width:60px;text-align:right;color:#1c1c2c;font-size:13px;">70 h</div>
<div style="left:1159px;top:623px;width:62px;height:20px;background:#ffffff;"></div>
<div style="left:1159px;top:643px;width:63px;height:1px;background:#dde2ea;"></div>
<div class="t" style="left:1159px;top:624px;width:59px;text-align:right;color:#1c1c2c;font-size:13px;">70 h</div>
<div style="left:709px;top:623px;width:2px;height:21px;background:#a9b3c3;"></div>
<div style="left:102px;top:644px;width:95px;height:20px;background:#ffffff;"></div>
<div style="left:102px;top:664px;width:96px;height:1px;background:#dde2ea;"></div>
<div style="left:197px;top:644px;width:1px;height:20px;background:#dde2ea;"></div>
<div class="t" style="left:106px;top:645px;width:91px;text-align:left;color:#1c1c2c;font-size:13px;">Welding Rob...</div>
<div style="left:198px;top:644px;width:134px;height:20px;background:#ffffff;"></div>
<div style="left:198px;top:664px;width:135px;height:1px;background:#dde2ea;"></div>
<div style="left:332px;top:644px;width:1px;height:20px;background:#dde2ea;"></div>
<div class="t" style="left:202px;top:645px;width:130px;text-align:left;color:#1c1c2c;font-size:13px;">F+W Main steel [23...</div>
<div style="left:333px;top:644px;width:91px;height:20px;background:#ffffff;"></div>
<div style="left:333px;top:664px;width:92px;height:1px;background:#dde2ea;"></div>
<div style="left:424px;top:644px;width:1px;height:20px;background:#dde2ea;"></div>
<div class="t" style="left:333px;top:645px;width:88px;text-align:right;color:#1c1c2c;font-size:13px;">30 000</div>
<div style="left:425px;top:644px;width:104px;height:20px;background:#ffffff;"></div>
<div style="left:425px;top:664px;width:105px;height:1px;background:#dde2ea;"></div>
<div style="left:529px;top:644px;width:1px;height:20px;background:#dde2ea;"></div>
<div class="t" style="left:425px;top:645px;width:101px;text-align:right;color:#1c1c2c;font-size:13px;">1 500,00 h</div>
<div style="left:530px;top:644px;width:98px;height:20px;background:#ffffff;"></div>
<div style="left:530px;top:664px;width:99px;height:1px;background:#dde2ea;"></div>
<div style="left:628px;top:644px;width:1px;height:20px;background:#dde2ea;"></div>
<div class="t" style="left:530px;top:645px;width:95px;text-align:right;color:#1c1c2c;font-size:13px;">760 h</div>
<div style="left:629px;top:644px;width:80px;height:20px;background:#ffffff;"></div>
<div style="left:629px;top:664px;width:81px;height:1px;background:#dde2ea;"></div>
<div class="t" style="left:629px;top:645px;width:77px;text-align:right;color:#1c1c2c;font-size:13px;"></div>
<div style="left:711px;top:644px;width:63px;height:20px;background:#ffffff;"></div>
<div style="left:711px;top:664px;width:64px;height:1px;background:#dde2ea;"></div>
<div style="left:774px;top:644px;width:1px;height:20px;background:#dde2ea;"></div>
<div class="t" style="left:711px;top:645px;width:60px;text-align:right;color:#1c1c2c;font-size:13px;">50 h</div>
<div style="left:775px;top:644px;width:63px;height:20px;background:#ffffff;"></div>
<div style="left:775px;top:664px;width:64px;height:1px;background:#dde2ea;"></div>
<div style="left:838px;top:644px;width:1px;height:20px;background:#dde2ea;"></div>
<div class="t" style="left:775px;top:645px;width:60px;text-align:right;color:#1c1c2c;font-size:13px;">80 h</div>
<div style="left:839px;top:644px;width:63px;height:20px;background:#ffffff;"></div>
<div style="left:839px;top:664px;width:64px;height:1px;background:#dde2ea;"></div>
<div style="left:902px;top:644px;width:1px;height:20px;background:#dde2ea;"></div>
<div class="t" style="left:839px;top:645px;width:60px;text-align:right;color:#1c1c2c;font-size:13px;">50 h</div>
<div style="left:903px;top:644px;width:63px;height:20px;background:#ffffff;"></div>
<div style="left:903px;top:664px;width:64px;height:1px;background:#dde2ea;"></div>
<div style="left:966px;top:644px;width:1px;height:20px;background:#dde2ea;"></div>
<div class="t" style="left:903px;top:645px;width:60px;text-align:right;color:#1c1c2c;font-size:13px;">50 h</div>
<div style="left:967px;top:644px;width:63px;height:20px;background:#ffffff;"></div>
<div style="left:967px;top:664px;width:64px;height:1px;background:#dde2ea;"></div>
<div style="left:1030px;top:644px;width:1px;height:20px;background:#dde2ea;"></div>
<div class="t" style="left:967px;top:645px;width:60px;text-align:right;color:#1c1c2c;font-size:13px;">50 h</div>
<div style="left:1031px;top:644px;width:63px;height:20px;background:#ffffff;"></div>
<div style="left:1031px;top:664px;width:64px;height:1px;background:#dde2ea;"></div>
<div style="left:1094px;top:644px;width:1px;height:20px;background:#dde2ea;"></div>
<div class="t" style="left:1031px;top:645px;width:60px;text-align:right;color:#1c1c2c;font-size:13px;">50 h</div>
<div style="left:1095px;top:644px;width:63px;height:20px;background:#ffffff;"></div>
<div style="left:1095px;top:664px;width:64px;height:1px;background:#dde2ea;"></div>
<div style="left:1158px;top:644px;width:1px;height:20px;background:#dde2ea;"></div>
<div class="t" style="left:1095px;top:645px;width:60px;text-align:right;color:#1c1c2c;font-size:13px;">50 h</div>
<div style="left:1159px;top:644px;width:62px;height:20px;background:#ffffff;"></div>
<div style="left:1159px;top:664px;width:63px;height:1px;background:#dde2ea;"></div>
<div class="t" style="left:1159px;top:645px;width:59px;text-align:right;color:#1c1c2c;font-size:13px;">80 h</div>
<div style="left:709px;top:644px;width:2px;height:21px;background:#a9b3c3;"></div>
<div style="left:102px;top:665px;width:95px;height:20px;background:#ffe8a6;"></div>
<div style="left:102px;top:685px;width:96px;height:1px;background:#dde2ea;"></div>
<div style="left:197px;top:665px;width:1px;height:20px;background:#dde2ea;"></div>
<div class="t" style="left:106px;top:666px;width:91px;text-align:left;color:#1c1c2c;font-size:13px;">Assembly ele...</div>
<div style="left:198px;top:665px;width:134px;height:20px;background:#ffe8a6;"></div>
<div style="left:198px;top:685px;width:135px;height:1px;background:#dde2ea;"></div>
<div style="left:332px;top:665px;width:1px;height:20px;background:#dde2ea;"></div>
<div class="t" style="left:202px;top:666px;width:130px;text-align:left;color:#1c1c2c;font-size:13px;">Assembly electric</div>
<div style="left:333px;top:665px;width:91px;height:20px;background:#ffe8a6;"></div>
<div style="left:333px;top:685px;width:92px;height:1px;background:#dde2ea;"></div>
<div style="left:424px;top:665px;width:1px;height:20px;background:#dde2ea;"></div>
<div class="t" style="left:333px;top:666px;width:88px;text-align:right;color:#1c1c2c;font-size:13px;">110 000</div>
<div style="left:425px;top:665px;width:104px;height:20px;background:#ffe8a6;"></div>
<div style="left:425px;top:685px;width:105px;height:1px;background:#dde2ea;"></div>
<div style="left:529px;top:665px;width:1px;height:20px;background:#dde2ea;"></div>
<div class="t" style="left:425px;top:666px;width:101px;text-align:right;color:#1c1c2c;font-size:13px;">1 120,00 h</div>
<div style="left:530px;top:665px;width:98px;height:20px;background:#ffe8a6;"></div>
<div style="left:530px;top:685px;width:99px;height:1px;background:#dde2ea;"></div>
<div style="left:628px;top:665px;width:1px;height:20px;background:#dde2ea;"></div>
<div class="t" style="left:530px;top:666px;width:95px;text-align:right;color:#1c1c2c;font-size:13px;">870 h</div>
<div style="left:629px;top:665px;width:80px;height:20px;background:#ffe8a6;"></div>
<div style="left:629px;top:685px;width:81px;height:1px;background:#dde2ea;"></div>
<div class="t" style="left:629px;top:666px;width:77px;text-align:right;color:#1c1c2c;font-size:13px;"></div>
<div style="left:711px;top:665px;width:63px;height:20px;background:#ffffff;"></div>
<div style="left:711px;top:685px;width:64px;height:1px;background:#dde2ea;"></div>
<div style="left:774px;top:665px;width:1px;height:20px;background:#dde2ea;"></div>
<div class="t" style="left:711px;top:666px;width:60px;text-align:right;color:#1c1c2c;font-size:13px;">60 h</div>
<div style="left:775px;top:665px;width:63px;height:20px;background:#ffe8a6;"></div>
<div style="left:775px;top:685px;width:64px;height:1px;background:#dde2ea;"></div>
<div style="left:838px;top:665px;width:1px;height:20px;background:#dde2ea;"></div>
<div class="t" style="left:775px;top:666px;width:60px;text-align:right;color:#1c1c2c;font-size:13px;">60 h</div>
<div style="left:839px;top:665px;width:63px;height:20px;background:#ffe8a6;"></div>
<div style="left:839px;top:685px;width:64px;height:1px;background:#dde2ea;"></div>
<div style="left:902px;top:665px;width:1px;height:20px;background:#dde2ea;"></div>
<div class="t" style="left:839px;top:666px;width:60px;text-align:right;color:#1c1c2c;font-size:13px;">60 h</div>
<div style="left:903px;top:665px;width:63px;height:20px;background:#ffe8a6;"></div>
<div style="left:903px;top:685px;width:64px;height:1px;background:#dde2ea;"></div>
<div style="left:966px;top:665px;width:1px;height:20px;background:#dde2ea;"></div>
<div class="t" style="left:903px;top:666px;width:60px;text-align:right;color:#1c1c2c;font-size:13px;">60 h</div>
<div style="left:967px;top:665px;width:63px;height:20px;background:#ffe8a6;"></div>
<div style="left:967px;top:685px;width:64px;height:1px;background:#dde2ea;"></div>
<div style="left:1030px;top:665px;width:1px;height:20px;background:#dde2ea;"></div>
<div class="t" style="left:967px;top:666px;width:60px;text-align:right;color:#1c1c2c;font-size:13px;">60 h</div>
<div style="left:1031px;top:665px;width:63px;height:20px;background:#ffe8a6;"></div>
<div style="left:1031px;top:685px;width:64px;height:1px;background:#dde2ea;"></div>
<div style="left:1094px;top:665px;width:1px;height:20px;background:#dde2ea;"></div>
<div class="t" style="left:1031px;top:666px;width:60px;text-align:right;color:#1c1c2c;font-size:13px;">60 h</div>
<div style="left:1095px;top:665px;width:63px;height:20px;background:#ffe8a6;"></div>
<div style="left:1095px;top:685px;width:64px;height:1px;background:#dde2ea;"></div>
<div style="left:1158px;top:665px;width:1px;height:20px;background:#dde2ea;"></div>
<div class="t" style="left:1095px;top:666px;width:60px;text-align:right;color:#1c1c2c;font-size:13px;">60 h</div>
<div style="left:1159px;top:665px;width:62px;height:20px;background:#ffe8a6;"></div>
<div style="left:1159px;top:685px;width:63px;height:1px;background:#dde2ea;"></div>
<div class="t" style="left:1159px;top:666px;width:59px;text-align:right;color:#1c1c2c;font-size:13px;">60 h</div>
<div style="left:709px;top:665px;width:2px;height:21px;background:#a9b3c3;"></div>
<svg style="position:absolute;left:26px;top:628.9px" width="9" height="9" viewBox="0 0 9 9"><circle cx="4.5" cy="4.5" r="3.6" fill="#111a36"/><rect x="3.85" y="2.0" width="1.3" height="3.3" fill="#fff"/><rect x="3.85" y="5.9" width="1.3" height="1.1" fill="#fff"/></svg>
<svg style="position:absolute;left:26px;top:649.9px" width="9" height="9" viewBox="0 0 9 9"><circle cx="4.5" cy="4.5" r="3.6" fill="#111a36"/><rect x="3.85" y="2.0" width="1.3" height="3.3" fill="#fff"/><rect x="3.85" y="5.9" width="1.3" height="1.1" fill="#fff"/></svg>
<svg style="position:absolute;left:26px;top:669.8px" width="9" height="9" viewBox="0 0 9 9"><circle cx="4.5" cy="4.5" r="3.6" fill="#111a36"/><rect x="3.85" y="2.0" width="1.3" height="3.3" fill="#fff"/><rect x="3.85" y="5.9" width="1.3" height="1.1" fill="#fff"/></svg>
<div style="left:28px;top:679px;width:5px;height:1px;background:#1a2030;"></div>
<div style="left:39px;top:665px;width:1181px;height:20px;box-sizing:border-box;border:1px dotted #202020;"></div>
<div style="left:23px;top:780px;width:1198px;height:1px;background:#b8c0cc;"></div>
<div style="left:23px;top:781px;width:1198px;height:29px;background:linear-gradient(#eceef2 0px,#eceef2 7px,#e4e7ec 8px,#e3e6eb 14px,#dcdfe6 15px,#dadee5 29px);"></div>
<div style="left:23px;top:810px;width:1198px;height:17px;background:#e9eaed;"></div>
<div style="left:23px;top:810px;width:1198px;height:1px;background:#f3f3f4;"></div>
<div style="left:23px;top:810px;width:53px;height:17px;background:linear-gradient(#f6f7f9 0px,#eceef2 6px,#d3d8df 16px);"></div>
<div style="left:76px;top:810px;width:75px;height:17px;background:#ffffff;"></div>
<div style="left:151px;top:810px;width:51px;height:17px;background:linear-gradient(#f6f7f9 0px,#eceef2 6px,#d3d8df 16px);"></div>
<div class="t" style="left:80px;top:809px;font-size:11px;color:#1c1c2c;line-height:20px">Record 3 of 3</div>
<svg style="position:absolute;left:27px;top:815px" width="9" height="7" viewBox="0 0 9 7"><path d="M0 0 H1.6 V7 H0 Z M1.6 3.5 L5.3 0 V7 Z M5.3 3.5 L9 0 V7 Z" fill="#1a1a2a"/></svg>
<svg style="position:absolute;left:45px;top:815px" width="8" height="7" viewBox="0 0 8 7"><path d="M0 3.5 L4 0 V7 Z M4 3.5 L8 0 V7 Z" fill="#1a1a2a"/></svg>
<svg style="position:absolute;left:65px;top:815px" width="4" height="7" viewBox="0 0 4 7"><path d="M0 3.5 L4 0 V7 Z" fill="#1a1a2a"/></svg>
<svg style="position:absolute;left:158px;top:815px" width="4" height="7" viewBox="0 0 4 7"><path d="M4 3.5 L0 0 V7 Z" fill="#8a8a8a"/></svg>
<svg style="position:absolute;left:173px;top:815px" width="8" height="7" viewBox="0 0 8 7"><path d="M8 3.5 L4 0 V7 Z M4 3.5 L0 0 V7 Z" fill="#8a8a8a"/></svg>
<svg style="position:absolute;left:190px;top:815px" width="9" height="7" viewBox="0 0 9 7"><path d="M9 0 H7.4 V7 H9 Z M7.4 3.5 L3.7 0 V7 Z M3.7 3.5 L0 0 V7 Z" fill="#8a8a8a"/></svg>
<svg style="position:absolute;left:208px;top:815px" width="5" height="7" viewBox="0 0 5 7"><path d="M4.5 0 V7 L0.5 3.5 Z" fill="#a8aeb8"/></svg>
<div style="left:219px;top:811px;width:82px;height:15px;box-sizing:border-box;border:1px solid #a9b0bb;border-radius:2px;background:linear-gradient(#f7f8fa,#e9ecf0 50%,#d9dde4 51%,#d5d9e0);"></div>
<div style="left:256px;top:815px;width:2px;height:7px;background:#6f7a8a;"></div>
<div style="left:259px;top:815px;width:2px;height:7px;background:#6f7a8a;"></div>
<div style="left:262px;top:815px;width:2px;height:7px;background:#6f7a8a;"></div>
<svg style="position:absolute;left:1211px;top:815px" width="5" height="7" viewBox="0 0 5 7"><path d="M0.5 0 V7 L4.5 3.5 Z" fill="#8d97aa"/></svg>
<div style="left:101px;top:815px;width:1px;height:17px;background:#1a1a1a;"></div>
<div style="left:93px;top:823px;width:17px;height:1px;background:#1a1a1a;"></div>
<div style="left:37px;top:692px;width:202px;height:27px;background:rgba(0,0,0,0.30);border-radius:2px;filter:blur(1.6px);"></div>
<div style="left:33px;top:688px;width:203px;height:28px;box-sizing:border-box;border:1px solid #6e6e6e;background:linear-gradient(#ffffff 0px,#ffffff 7px,#f2f4f7 8px,#eceef2 14px,#e8ebf0 15px,#e6e9ee 26px);"></div>
<svg style="position:absolute;left:42px;top:694px" width="16" height="14" viewBox="0 0 16 14"><path d="M7.2 0 H8.8 L16 14 H0 Z" fill="#f3b531"/><rect x="7.2" y="4" width="1.6" height="4.6" fill="#1a1a2a"/><rect x="7.2" y="10" width="1.6" height="2" fill="#1a1a2a"/></svg>
<div class="t" style="left:72px;top:691px;text-align:left;color:#1c1c2c;font-size:11px;letter-spacing:-0.1px;">Out of milestone planned range.</div>
<svg style="position:absolute;left:33px;top:674px" width="14" height="20" viewBox="0 0 14 20"><path d="M0.5 0.5 V16 L4 12.5 L6.5 18.5 L9 17.5 L6.5 11.5 H11.5 Z" fill="#fff" stroke="#000" stroke-width="1"/></svg>
</body></html>
